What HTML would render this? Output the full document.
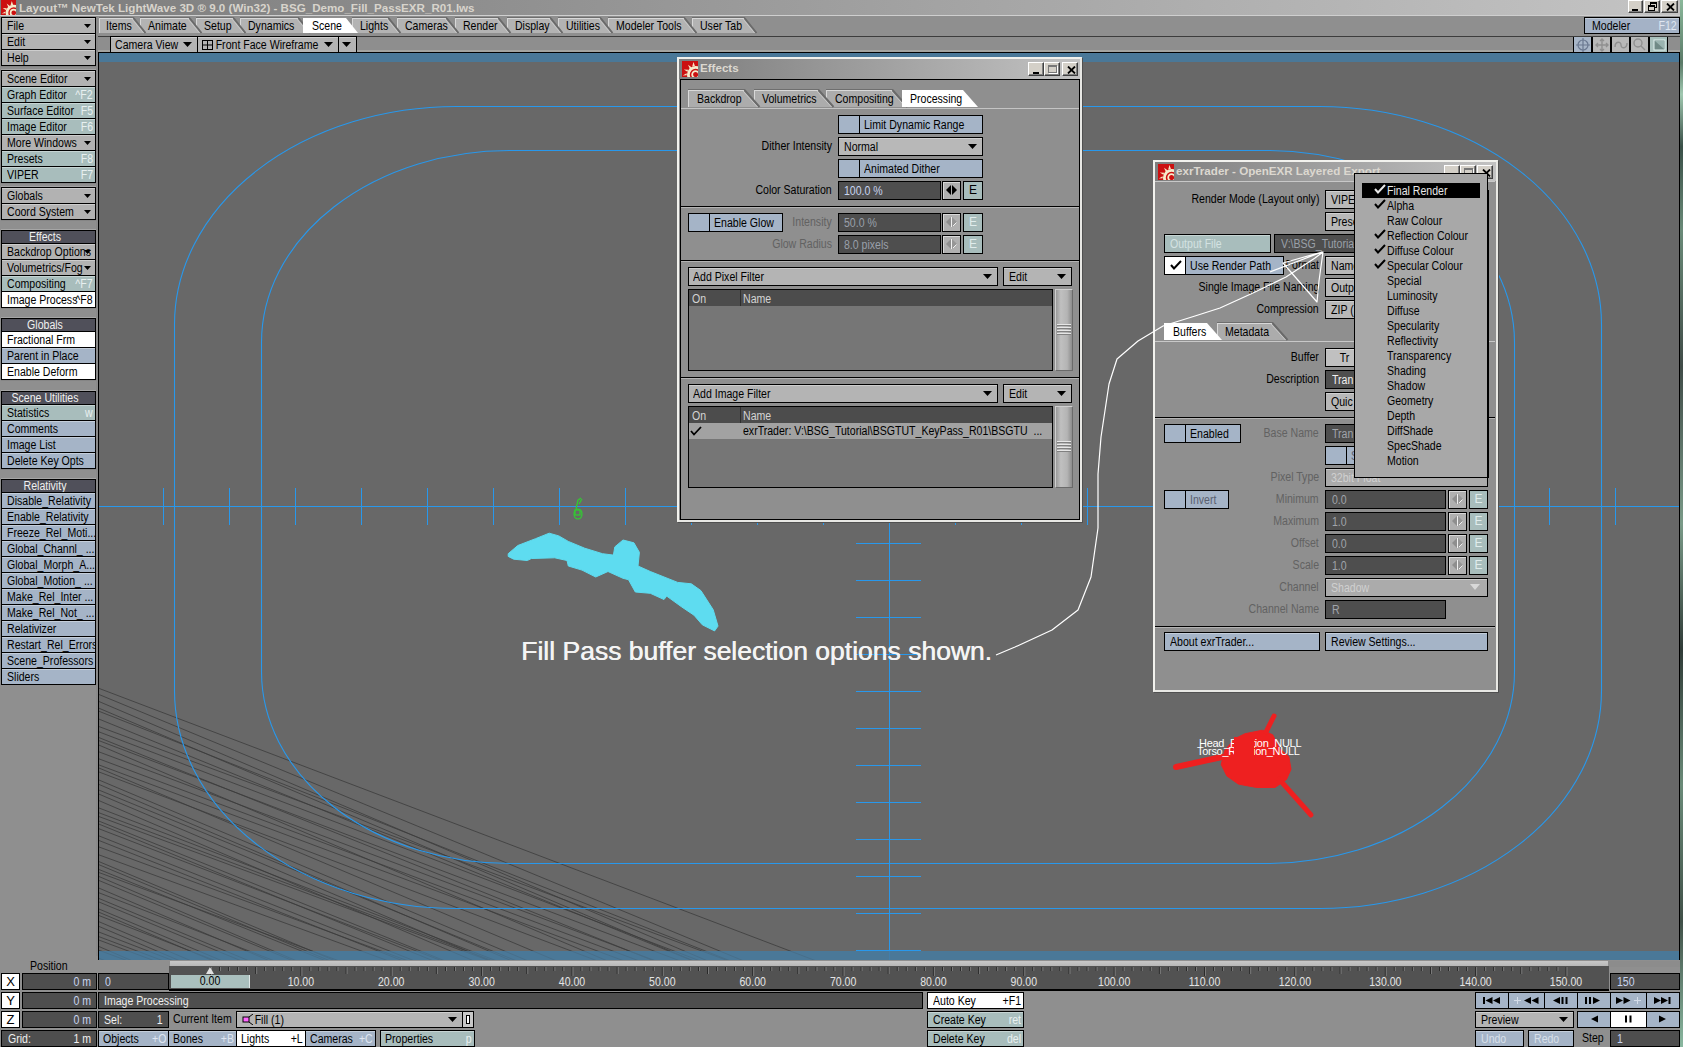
<!DOCTYPE html><html><head><meta charset="utf-8"><style>
*{margin:0;padding:0;box-sizing:border-box}
html,body{width:1683px;height:1047px;overflow:hidden;background:#9a9a9a;font-family:"Liberation Sans",sans-serif;font-size:12px;letter-spacing:0;color:#000}
div,svg,span,i{position:absolute}
.t{white-space:nowrap;line-height:1}
.b{overflow:hidden}
.lbl{white-space:nowrap;top:1px}
.hl{left:0;top:0;right:0;height:1px;background:rgba(255,255,255,.35)}
.a{display:block}
.sx{transform:scaleX(.88);transform-origin:0 0}
.sxr{transform:scaleX(.88);transform-origin:100% 0}
.sxc{transform:scaleX(.88);transform-origin:50% 0}
</style></head><body><div style="left:0px;top:0px;width:1680px;height:16px;background:linear-gradient(to right,#7c7c7c 0%,#8c8c8c 25%,#c4c4c4 100%)"></div>
<div style="left:0px;top:15px;width:1680px;height:1px;background:#cfcfcf"></div>
<svg style="left:1px;top:0px" width="15" height="15" viewBox="0 0 16 16">
<defs><clipPath id="ic1_0"><rect x="0" y="0" width="16" height="16"/></clipPath></defs>
<g clip-path="url(#ic1_0)">
<rect x="0" y="0" width="16" height="16" fill="#cc1010"/>
<g fill="#f6e6c4"><polygon points="11.5,1 10.2,5.5 13,5.2"/><polygon points="6,3.8 8,8.2 9.8,6.6"/><polygon points="1.8,8.5 5.4,10.8 6.2,8.8"/><polygon points="0.8,14.5 4.8,14.2 4.6,12.2"/></g>
<circle cx="13.6" cy="13.6" r="7.2" fill="none" stroke="#f6eccc" stroke-width="2.8"/>
<circle cx="13.6" cy="13.6" r="3.4" fill="none" stroke="#f6eccc" stroke-width="1.8"/>
</g></svg>
<div class="t" style="left:19px;top:2px;font-weight:bold;font-size:11.6px;color:#d8d4cc;letter-spacing:0px">Layout&trade; NewTek LightWave 3D &reg; 9.0 (Win32) - BSG_Demo_Fill_PassEXR_R01.lws</div>
<div style="left:1628px;top:0px;width:15px;height:13px;background:#d4d0c8;border-top:1px solid #fff;border-left:1px solid #fff;border-right:1px solid #404040;border-bottom:1px solid #404040;box-shadow:inset -1px -1px 0 #808080"><div style="left:3px;top:8px;width:6px;height:2px;background:#000"></div></div>
<div style="left:1644px;top:0px;width:16px;height:13px;background:#d4d0c8;border-top:1px solid #fff;border-left:1px solid #fff;border-right:1px solid #404040;border-bottom:1px solid #404040;box-shadow:inset -1px -1px 0 #808080"><div style="left:5px;top:1px;width:7px;height:6px;border:1px solid #000;border-top-width:2px"></div><div style="left:3px;top:4px;width:7px;height:6px;border:1px solid #000;border-top-width:2px;background:#d4d0c8"></div></div>
<div style="left:1661px;top:0px;width:17px;height:13px;background:#d4d0c8;border-top:1px solid #fff;border-left:1px solid #fff;border-right:1px solid #404040;border-bottom:1px solid #404040;box-shadow:inset -1px -1px 0 #808080"><svg style="left:4px;top:2px" width="9" height="8"><path d="M1,0.5 L8,7.5 M8,0.5 L1,7.5" stroke="#000" stroke-width="1.8"/></svg></div>
<div style="left:1680px;top:0px;width:3px;height:1047px;background:linear-gradient(to bottom,#8ab89a 0%,#5a7a68 6%,#a0c8b0 9%,#3a5048 14%,#6a8a78 22%,#404c48 35%,#7a9a88 50%,#303c38 62%,#6a8a78 75%,#405048 88%,#8ab8a0 100%)"></div>
<div style="left:96px;top:16px;width:1584px;height:20px;background:#8f8f8f"></div>
<div style="left:96px;top:36px;width:1584px;height:1px;background:#3c3c3c"></div>
<div style="left:98px;top:37px;width:1582px;height:15px;background:#8e8e8e"></div>
<div style="left:98px;top:50px;width:1582px;height:2px;background:#a4a4a0"></div>
<div style="left:0px;top:16px;width:98px;height:1031px;background:#8f8f8f"></div>
<div style="left:1px;top:66px;width:95px;height:1px;background:#858585"></div>
<div style="left:1px;top:183px;width:95px;height:1px;background:#858585"></div>
<div style="left:1px;top:220px;width:95px;height:1px;background:#858585"></div>
<div style="left:1px;top:308px;width:95px;height:1px;background:#858585"></div>
<div style="left:1px;top:380px;width:95px;height:1px;background:#858585"></div>
<div style="left:1px;top:469px;width:95px;height:1px;background:#858585"></div>
<div style="left:1px;top:69px;width:95px;height:1px;background:#a6a6a6"></div>
<div style="left:1px;top:186px;width:95px;height:1px;background:#a6a6a6"></div>
<div style="left:1px;top:229px;width:95px;height:1px;background:#a6a6a6"></div>
<div style="left:1px;top:317px;width:95px;height:1px;background:#a6a6a6"></div>
<div style="left:1px;top:390px;width:95px;height:1px;background:#a6a6a6"></div>
<div style="left:1px;top:478px;width:95px;height:1px;background:#a6a6a6"></div>
<div style="left:1px;top:684px;width:95px;height:1px;background:#a6a6a6"></div>
<div style="left:96px;top:16px;width:2px;height:940px;background:#8a8a8a"></div>
<div class="b" style="left:1px;top:70px;width:95px;height:17px;background:#b2b2b2;border:1px solid #000;line-height:15px;"><i class="hl"></i><span class="lbl sx" style="left:5px;color:#000;font-size:12px">Scene Editor</span><svg class="a" style="right:4px;top:5.5px" width="7" height="4"><polygon points="0,0 7,0 3.5,4" fill="#000"/></svg></div>
<div class="b" style="left:1px;top:86px;width:95px;height:17px;background:#a8bdbc;border:1px solid #000;line-height:15px;"><i class="hl"></i><span class="lbl sx" style="left:5px;color:#000;font-size:12px">Graph Editor</span><span class="lbl sxr" style="right:2px;color:#e8f0f0;font-size:12px">^F2</span></div>
<div class="b" style="left:1px;top:102px;width:95px;height:17px;background:#a8bdbc;border:1px solid #000;line-height:15px;"><i class="hl"></i><span class="lbl sx" style="left:5px;color:#000;font-size:12px">Surface Editor</span><span class="lbl sxr" style="right:2px;color:#e8f0f0;font-size:12px">F5</span></div>
<div class="b" style="left:1px;top:118px;width:95px;height:17px;background:#a8bdbc;border:1px solid #000;line-height:15px;"><i class="hl"></i><span class="lbl sx" style="left:5px;color:#000;font-size:12px">Image Editor</span><span class="lbl sxr" style="right:2px;color:#e8f0f0;font-size:12px">F6</span></div>
<div class="b" style="left:1px;top:134px;width:95px;height:17px;background:#b2b2b2;border:1px solid #000;line-height:15px;"><i class="hl"></i><span class="lbl sx" style="left:5px;color:#000;font-size:12px">More Windows</span><svg class="a" style="right:4px;top:5.5px" width="7" height="4"><polygon points="0,0 7,0 3.5,4" fill="#000"/></svg></div>
<div class="b" style="left:1px;top:150px;width:95px;height:17px;background:#a8bdbc;border:1px solid #000;line-height:15px;"><i class="hl"></i><span class="lbl sx" style="left:5px;color:#000;font-size:12px">Presets</span><span class="lbl sxr" style="right:2px;color:#e8f0f0;font-size:12px">F8</span></div>
<div class="b" style="left:1px;top:166px;width:95px;height:17px;background:#a8bdbc;border:1px solid #000;line-height:15px;"><i class="hl"></i><span class="lbl sx" style="left:5px;color:#000;font-size:12px">VIPER</span><span class="lbl sxr" style="right:2px;color:#e8f0f0;font-size:12px">F7</span></div>
<div class="b" style="left:1px;top:187px;width:95px;height:17px;background:#b2b2b2;border:1px solid #000;line-height:15px;"><i class="hl"></i><span class="lbl sx" style="left:5px;color:#000;font-size:12px">Globals</span><svg class="a" style="right:4px;top:5.5px" width="7" height="4"><polygon points="0,0 7,0 3.5,4" fill="#000"/></svg></div>
<div class="b" style="left:1px;top:203px;width:95px;height:17px;background:#b2b2b2;border:1px solid #000;line-height:15px;"><i class="hl"></i><span class="lbl sx" style="left:5px;color:#000;font-size:12px">Coord System</span><svg class="a" style="right:4px;top:5.5px" width="7" height="4"><polygon points="0,0 7,0 3.5,4" fill="#000"/></svg></div>
<div style="left:1px;top:230px;width:95px;height:14px;background:#50505a;border:1px solid #000;color:#f0f0f0;line-height:12px;font-size:12px"><span class="sxc" style="left:0;right:7px;top:0;text-align:center">Effects</span></div>
<div class="b" style="left:1px;top:243px;width:95px;height:17px;background:#b2b2b2;border:1px solid #000;line-height:15px;"><i class="hl"></i><span class="lbl sx" style="left:5px;color:#000;font-size:12px">Backdrop Options</span><svg class="a" style="right:4px;top:5.5px" width="7" height="4"><polygon points="0,0 7,0 3.5,4" fill="#000"/></svg></div>
<div class="b" style="left:1px;top:259px;width:95px;height:17px;background:#b2b2b2;border:1px solid #000;line-height:15px;"><i class="hl"></i><span class="lbl sx" style="left:5px;color:#000;font-size:12px">Volumetrics/Fog</span><svg class="a" style="right:4px;top:5.5px" width="7" height="4"><polygon points="0,0 7,0 3.5,4" fill="#000"/></svg></div>
<div class="b" style="left:1px;top:275px;width:95px;height:17px;background:#a8bdbc;border:1px solid #000;line-height:15px;"><i class="hl"></i><span class="lbl sx" style="left:5px;color:#000;font-size:12px">Compositing</span><span class="lbl sxr" style="right:2px;color:#e8f0f0;font-size:12px">^F7</span></div>
<div class="b" style="left:1px;top:291px;width:95px;height:17px;background:#ffffff;border:1px solid #000;line-height:15px;"><i class="hl"></i><span class="lbl sx" style="left:5px;color:#000;font-size:12px">Image Process</span><span class="lbl sxr" style="right:2px;color:#000;font-size:12px">^F8</span></div>
<div style="left:1px;top:318px;width:95px;height:14px;background:#50505a;border:1px solid #000;color:#f0f0f0;line-height:12px;font-size:12px"><span class="sxc" style="left:0;right:7px;top:0;text-align:center">Globals</span></div>
<div class="b" style="left:1px;top:331px;width:95px;height:17px;background:#ffffff;border:1px solid #000;line-height:15px;"><i class="hl"></i><span class="lbl sx" style="left:5px;color:#000;font-size:12px">Fractional Frm</span></div>
<div class="b" style="left:1px;top:347px;width:95px;height:17px;background:#a5b4c7;border:1px solid #000;line-height:15px;"><i class="hl"></i><span class="lbl sx" style="left:5px;color:#000;font-size:12px">Parent in Place</span></div>
<div class="b" style="left:1px;top:363px;width:95px;height:17px;background:#ffffff;border:1px solid #000;line-height:15px;"><i class="hl"></i><span class="lbl sx" style="left:5px;color:#000;font-size:12px">Enable Deform</span></div>
<div style="left:1px;top:391px;width:95px;height:14px;background:#50505a;border:1px solid #000;color:#f0f0f0;line-height:12px;font-size:12px"><span class="sxc" style="left:0;right:7px;top:0;text-align:center">Scene Utilities</span></div>
<div class="b" style="left:1px;top:404px;width:95px;height:17px;background:#a8bdbc;border:1px solid #000;line-height:15px;"><i class="hl"></i><span class="lbl sx" style="left:5px;color:#000;font-size:12px">Statistics</span><span class="lbl sxr" style="right:2px;color:#e8f0f0;font-size:12px">w</span></div>
<div class="b" style="left:1px;top:420px;width:95px;height:17px;background:#a5b4c7;border:1px solid #000;line-height:15px;"><i class="hl"></i><span class="lbl sx" style="left:5px;color:#000;font-size:12px">Comments</span></div>
<div class="b" style="left:1px;top:436px;width:95px;height:17px;background:#a5b4c7;border:1px solid #000;line-height:15px;"><i class="hl"></i><span class="lbl sx" style="left:5px;color:#000;font-size:12px">Image List</span></div>
<div class="b" style="left:1px;top:452px;width:95px;height:17px;background:#a5b4c7;border:1px solid #000;line-height:15px;"><i class="hl"></i><span class="lbl sx" style="left:5px;color:#000;font-size:12px">Delete Key Opts</span></div>
<div style="left:1px;top:479px;width:95px;height:14px;background:#50505a;border:1px solid #000;color:#f0f0f0;line-height:12px;font-size:12px"><span class="sxc" style="left:0;right:7px;top:0;text-align:center">Relativity</span></div>
<div class="b" style="left:1px;top:492px;width:95px;height:17px;background:#a5b4c7;border:1px solid #000;line-height:15px;"><i class="hl"></i><span class="lbl sx" style="left:5px;color:#000;font-size:12px">Disable_Relativity</span></div>
<div class="b" style="left:1px;top:508px;width:95px;height:17px;background:#a5b4c7;border:1px solid #000;line-height:15px;"><i class="hl"></i><span class="lbl sx" style="left:5px;color:#000;font-size:12px">Enable_Relativity</span></div>
<div class="b" style="left:1px;top:524px;width:95px;height:17px;background:#a5b4c7;border:1px solid #000;line-height:15px;"><i class="hl"></i><span class="lbl sx" style="left:5px;color:#000;font-size:12px">Freeze_Rel_Moti...</span></div>
<div class="b" style="left:1px;top:540px;width:95px;height:17px;background:#a5b4c7;border:1px solid #000;line-height:15px;"><i class="hl"></i><span class="lbl sx" style="left:5px;color:#000;font-size:12px">Global_Channl_ ...</span></div>
<div class="b" style="left:1px;top:556px;width:95px;height:17px;background:#a5b4c7;border:1px solid #000;line-height:15px;"><i class="hl"></i><span class="lbl sx" style="left:5px;color:#000;font-size:12px">Global_Morph_A...</span></div>
<div class="b" style="left:1px;top:572px;width:95px;height:17px;background:#a5b4c7;border:1px solid #000;line-height:15px;"><i class="hl"></i><span class="lbl sx" style="left:5px;color:#000;font-size:12px">Global_Motion_ ...</span></div>
<div class="b" style="left:1px;top:588px;width:95px;height:17px;background:#a5b4c7;border:1px solid #000;line-height:15px;"><i class="hl"></i><span class="lbl sx" style="left:5px;color:#000;font-size:12px">Make_Rel_Inter ...</span></div>
<div class="b" style="left:1px;top:604px;width:95px;height:17px;background:#a5b4c7;border:1px solid #000;line-height:15px;"><i class="hl"></i><span class="lbl sx" style="left:5px;color:#000;font-size:12px">Make_Rel_Not_ ...</span></div>
<div class="b" style="left:1px;top:620px;width:95px;height:17px;background:#a5b4c7;border:1px solid #000;line-height:15px;"><i class="hl"></i><span class="lbl sx" style="left:5px;color:#000;font-size:12px">Relativizer</span></div>
<div class="b" style="left:1px;top:636px;width:95px;height:17px;background:#a5b4c7;border:1px solid #000;line-height:15px;"><i class="hl"></i><span class="lbl sx" style="left:5px;color:#000;font-size:12px">Restart_Rel_Errors</span></div>
<div class="b" style="left:1px;top:652px;width:95px;height:17px;background:#a5b4c7;border:1px solid #000;line-height:15px;"><i class="hl"></i><span class="lbl sx" style="left:5px;color:#000;font-size:12px">Scene_Professors</span></div>
<div class="b" style="left:1px;top:668px;width:95px;height:17px;background:#a5b4c7;border:1px solid #000;line-height:15px;"><i class="hl"></i><span class="lbl sx" style="left:5px;color:#000;font-size:12px">Sliders</span></div>
<svg style="left:96px;top:16px" width="700" height="20"><polygon points="596,17 596,2 648,2 660,17" fill="#b3b3b3"/><line x1="596" y1="1.5" x2="649" y2="1.5" stroke="#6e6e6e" stroke-width="1"/><line x1="596.5" y1="2" x2="596.5" y2="17" stroke="#d8d8d8" stroke-width="1"/><line x1="596" y1="2.5" x2="648" y2="2.5" stroke="#d8d8d8" stroke-width="1"/><line x1="648.5" y1="2" x2="660.5" y2="17" stroke="#6a6a6a" stroke-width="2"/><line x1="647" y1="3" x2="658.5" y2="17" stroke="#c8c8c8" stroke-width="1"/><text transform="translate(604,0) scale(.88,1)" x="0" y="13.94" font-family="Liberation Sans" font-size="12" fill="#000">User Tab</text><polygon points="512,17 512,2 588,2 600,17" fill="#b3b3b3"/><line x1="512" y1="1.5" x2="589" y2="1.5" stroke="#6e6e6e" stroke-width="1"/><line x1="512.5" y1="2" x2="512.5" y2="17" stroke="#d8d8d8" stroke-width="1"/><line x1="512" y1="2.5" x2="588" y2="2.5" stroke="#d8d8d8" stroke-width="1"/><line x1="588.5" y1="2" x2="600.5" y2="17" stroke="#6a6a6a" stroke-width="2"/><line x1="587" y1="3" x2="598.5" y2="17" stroke="#c8c8c8" stroke-width="1"/><text transform="translate(520,0) scale(.88,1)" x="0" y="13.94" font-family="Liberation Sans" font-size="12" fill="#000">Modeler Tools</text><polygon points="462,17 462,2 504,2 516,17" fill="#b3b3b3"/><line x1="462" y1="1.5" x2="505" y2="1.5" stroke="#6e6e6e" stroke-width="1"/><line x1="462.5" y1="2" x2="462.5" y2="17" stroke="#d8d8d8" stroke-width="1"/><line x1="462" y1="2.5" x2="504" y2="2.5" stroke="#d8d8d8" stroke-width="1"/><line x1="504.5" y1="2" x2="516.5" y2="17" stroke="#6a6a6a" stroke-width="2"/><line x1="503" y1="3" x2="514.5" y2="17" stroke="#c8c8c8" stroke-width="1"/><text transform="translate(470,0) scale(.88,1)" x="0" y="13.94" font-family="Liberation Sans" font-size="12" fill="#000">Utilities</text><polygon points="411,17 411,2 454,2 466,17" fill="#b3b3b3"/><line x1="411" y1="1.5" x2="455" y2="1.5" stroke="#6e6e6e" stroke-width="1"/><line x1="411.5" y1="2" x2="411.5" y2="17" stroke="#d8d8d8" stroke-width="1"/><line x1="411" y1="2.5" x2="454" y2="2.5" stroke="#d8d8d8" stroke-width="1"/><line x1="454.5" y1="2" x2="466.5" y2="17" stroke="#6a6a6a" stroke-width="2"/><line x1="453" y1="3" x2="464.5" y2="17" stroke="#c8c8c8" stroke-width="1"/><text transform="translate(419,0) scale(.88,1)" x="0" y="13.94" font-family="Liberation Sans" font-size="12" fill="#000">Display</text><polygon points="359,17 359,2 402,2 414,17" fill="#b3b3b3"/><line x1="359" y1="1.5" x2="403" y2="1.5" stroke="#6e6e6e" stroke-width="1"/><line x1="359.5" y1="2" x2="359.5" y2="17" stroke="#d8d8d8" stroke-width="1"/><line x1="359" y1="2.5" x2="402" y2="2.5" stroke="#d8d8d8" stroke-width="1"/><line x1="402.5" y1="2" x2="414.5" y2="17" stroke="#6a6a6a" stroke-width="2"/><line x1="401" y1="3" x2="412.5" y2="17" stroke="#c8c8c8" stroke-width="1"/><text transform="translate(367,0) scale(.88,1)" x="0" y="13.94" font-family="Liberation Sans" font-size="12" fill="#000">Render</text><polygon points="301,17 301,2 350,2 362,17" fill="#b3b3b3"/><line x1="301" y1="1.5" x2="351" y2="1.5" stroke="#6e6e6e" stroke-width="1"/><line x1="301.5" y1="2" x2="301.5" y2="17" stroke="#d8d8d8" stroke-width="1"/><line x1="301" y1="2.5" x2="350" y2="2.5" stroke="#d8d8d8" stroke-width="1"/><line x1="350.5" y1="2" x2="362.5" y2="17" stroke="#6a6a6a" stroke-width="2"/><line x1="349" y1="3" x2="360.5" y2="17" stroke="#c8c8c8" stroke-width="1"/><text transform="translate(309,0) scale(.88,1)" x="0" y="13.94" font-family="Liberation Sans" font-size="12" fill="#000">Cameras</text><polygon points="256,17 256,2 292,2 304,17" fill="#b3b3b3"/><line x1="256" y1="1.5" x2="293" y2="1.5" stroke="#6e6e6e" stroke-width="1"/><line x1="256.5" y1="2" x2="256.5" y2="17" stroke="#d8d8d8" stroke-width="1"/><line x1="256" y1="2.5" x2="292" y2="2.5" stroke="#d8d8d8" stroke-width="1"/><line x1="292.5" y1="2" x2="304.5" y2="17" stroke="#6a6a6a" stroke-width="2"/><line x1="291" y1="3" x2="302.5" y2="17" stroke="#c8c8c8" stroke-width="1"/><text transform="translate(264,0) scale(.88,1)" x="0" y="13.94" font-family="Liberation Sans" font-size="12" fill="#000">Lights</text><polygon points="144,17 144,2 202,2 214,17" fill="#b3b3b3"/><line x1="144" y1="1.5" x2="203" y2="1.5" stroke="#6e6e6e" stroke-width="1"/><line x1="144.5" y1="2" x2="144.5" y2="17" stroke="#d8d8d8" stroke-width="1"/><line x1="144" y1="2.5" x2="202" y2="2.5" stroke="#d8d8d8" stroke-width="1"/><line x1="202.5" y1="2" x2="214.5" y2="17" stroke="#6a6a6a" stroke-width="2"/><line x1="201" y1="3" x2="212.5" y2="17" stroke="#c8c8c8" stroke-width="1"/><text transform="translate(152,0) scale(.88,1)" x="0" y="13.94" font-family="Liberation Sans" font-size="12" fill="#000">Dynamics</text><polygon points="100,17 100,2 137,2 149,17" fill="#b3b3b3"/><line x1="100" y1="1.5" x2="138" y2="1.5" stroke="#6e6e6e" stroke-width="1"/><line x1="100.5" y1="2" x2="100.5" y2="17" stroke="#d8d8d8" stroke-width="1"/><line x1="100" y1="2.5" x2="137" y2="2.5" stroke="#d8d8d8" stroke-width="1"/><line x1="137.5" y1="2" x2="149.5" y2="17" stroke="#6a6a6a" stroke-width="2"/><line x1="136" y1="3" x2="147.5" y2="17" stroke="#c8c8c8" stroke-width="1"/><text transform="translate(108,0) scale(.88,1)" x="0" y="13.94" font-family="Liberation Sans" font-size="12" fill="#000">Setup</text><polygon points="44,17 44,2 93,2 105,17" fill="#b3b3b3"/><line x1="44" y1="1.5" x2="94" y2="1.5" stroke="#6e6e6e" stroke-width="1"/><line x1="44.5" y1="2" x2="44.5" y2="17" stroke="#d8d8d8" stroke-width="1"/><line x1="44" y1="2.5" x2="93" y2="2.5" stroke="#d8d8d8" stroke-width="1"/><line x1="93.5" y1="2" x2="105.5" y2="17" stroke="#6a6a6a" stroke-width="2"/><line x1="92" y1="3" x2="103.5" y2="17" stroke="#c8c8c8" stroke-width="1"/><text transform="translate(52,0) scale(.88,1)" x="0" y="13.94" font-family="Liberation Sans" font-size="12" fill="#000">Animate</text><polygon points="3,17 3,2 37,2 49,17" fill="#b3b3b3"/><line x1="3" y1="1.5" x2="38" y2="1.5" stroke="#6e6e6e" stroke-width="1"/><line x1="3.5" y1="2" x2="3.5" y2="17" stroke="#d8d8d8" stroke-width="1"/><line x1="3" y1="2.5" x2="37" y2="2.5" stroke="#d8d8d8" stroke-width="1"/><line x1="37.5" y1="2" x2="49.5" y2="17" stroke="#6a6a6a" stroke-width="2"/><line x1="36" y1="3" x2="47.5" y2="17" stroke="#c8c8c8" stroke-width="1"/><text transform="translate(10,0) scale(.88,1)" x="0" y="13.94" font-family="Liberation Sans" font-size="12" fill="#000">Items</text><polygon points="207,17 207,2 250,2 262,17" fill="#ffffff"/><text transform="translate(216,0) scale(.88,1)" x="0" y="13.94" font-family="Liberation Sans" font-size="12" fill="#000">Scene</text></svg>
<div class="b" style="left:1584px;top:17px;width:96px;height:17px;background:#a4b2c6;border:1px solid #000;line-height:15px;"><i class="hl"></i><span class="lbl sx" style="left:7px;color:#000;font-size:12px">Modeler</span><span class="lbl sxr" style="right:2px;color:#dfe6f0;font-size:12px">F12</span></div>
<div class="b" style="left:1px;top:17px;width:95px;height:17px;background:#b2b2b2;border:1px solid #000;line-height:15px;"><i class="hl"></i><span class="lbl sx" style="left:5px;color:#000;font-size:12px">File</span><svg class="a" style="right:4px;top:5.5px" width="7" height="4"><polygon points="0,0 7,0 3.5,4" fill="#000"/></svg></div>
<div class="b" style="left:1px;top:33px;width:95px;height:17px;background:#b2b2b2;border:1px solid #000;line-height:15px;"><i class="hl"></i><span class="lbl sx" style="left:5px;color:#000;font-size:12px">Edit</span><svg class="a" style="right:4px;top:5.5px" width="7" height="4"><polygon points="0,0 7,0 3.5,4" fill="#000"/></svg></div>
<div class="b" style="left:1px;top:49px;width:95px;height:17px;background:#b2b2b2;border:1px solid #000;line-height:15px;"><i class="hl"></i><span class="lbl sx" style="left:5px;color:#000;font-size:12px">Help</span><svg class="a" style="right:4px;top:5.5px" width="7" height="4"><polygon points="0,0 7,0 3.5,4" fill="#000"/></svg></div>
<div class="b" style="left:110px;top:36px;width:88px;height:17px;background:#b4b4b4;border:1px solid #000;border-bottom:none;line-height:15px;"><i class="hl"></i><span class="lbl sx" style="left:4px;color:#000;font-size:12px">Camera View</span><svg class="a" style="right:5px;top:5.0px" width="9" height="5"><polygon points="0,0 9,0 4.5,5" fill="#000"/></svg></div>
<div class="b" style="left:197px;top:36px;width:142px;height:17px;background:#b4b4b4;border:1px solid #000;border-bottom:none;line-height:15px;"><i class="hl"></i><span class="lbl sx" style="left:3px;color:#000;font-size:12px">&nbsp;&nbsp;&nbsp;&nbsp;&nbsp;Front Face Wireframe</span><svg class="a" style="right:5px;top:5.0px" width="9" height="5"><polygon points="0,0 9,0 4.5,5" fill="#000"/></svg></div>
<svg style="left:202px;top:40px" width="11" height="10"><rect x="0.5" y="0.5" width="10" height="9" fill="none" stroke="#000"/><path d="M5.5,0 V10 M0,5 H11" stroke="#000"/></svg>
<div class="b" style="left:338px;top:36px;width:19px;height:17px;background:#b4b4b4;border:1px solid #000;border-bottom:none;line-height:15px;"><i class="hl"></i><span class="lbl sx" style="left:6px;color:#000;font-size:12px"></span><svg class="a" style="right:5px;top:5.0px" width="9" height="5"><polygon points="0,0 9,0 4.5,5" fill="#000"/></svg></div>
<div style="left:1573px;top:37px;width:19px;height:16px;background:#a8b6c8;border-left:1px solid #000;border-right:1px solid #000"></div>
<div style="left:1592px;top:37px;width:19px;height:16px;background:#b8b8b8;border-left:1px solid #000;border-right:1px solid #000"></div>
<div style="left:1611px;top:37px;width:19px;height:16px;background:#b8b8b8;border-left:1px solid #000;border-right:1px solid #000"></div>
<div style="left:1630px;top:37px;width:19px;height:16px;background:#b8b8b8;border-left:1px solid #000;border-right:1px solid #000"></div>
<div style="left:1649px;top:37px;width:19px;height:16px;background:#a8c0bc;border-left:1px solid #000;border-right:1px solid #000"></div>
<svg style="left:1573px;top:37px" width="96" height="16">
<g fill="none" stroke="#6a7890" stroke-width="1.2"><circle cx="10" cy="8" r="5"/><path d="M10,1 V15 M3,8 H17"/></g>
<g fill="none" stroke="#909090" stroke-width="1.4"><path d="M29,2 V14 M23,8 H35 M27,4 L29,2 L31,4 M27,12 L29,14 L31,12 M25,6 L23,8 L25,10 M33,6 L35,8 L33,10"/></g>
<g fill="none" stroke="#909090" stroke-width="1.4"><path d="M42,10 C42,4 48,4 48,8 M48,8 C48,12 54,12 54,6"/></g>
<g fill="none" stroke="#909090" stroke-width="1.4"><circle cx="65" cy="6" r="4"/><path d="M68,9 L72,13"/></g>
<g><rect x="81" y="3" width="11" height="10" fill="#708a86" stroke="#e0f0ee" stroke-width="1"/><polygon points="82,4 91,4 91,12" fill="#9ab4b0"/></g>
</svg>
<div style="left:98px;top:52px;width:1582px;height:909px;background:#686868;border:1px solid #000"></div>
<div style="left:99px;top:53px;width:1580px;height:9px;background:linear-gradient(to bottom,#4a7a9a 0%,#4a7898 75%,#5a6e7c 100%)"></div>
<div style="left:99px;top:951px;width:1580px;height:9px;background:#4a7898"></div>
<svg style="left:0;top:0" width="1683" height="1047"><defs><clipPath id="vp"><rect x="99" y="53" width="1580" height="907"/></clipPath></defs><g clip-path="url(#vp)"><line x1="98" y1="688.0" x2="819.1" y2="962" stroke="#3c3c3c" stroke-width="1" stroke-opacity="0.8"/><line x1="98" y1="694.1" x2="746.3" y2="962" stroke="#3c3c3c" stroke-width="1" stroke-opacity="0.8"/><line x1="98" y1="701.1" x2="710.1" y2="962" stroke="#3c3c3c" stroke-width="1" stroke-opacity="0.8"/><line x1="98" y1="707.8" x2="696.2" y2="962" stroke="#3c3c3c" stroke-width="1" stroke-opacity="0.8"/><line x1="98" y1="710.9" x2="733.2" y2="962" stroke="#3c3c3c" stroke-width="1" stroke-opacity="0.8"/><line x1="98" y1="718.7" x2="695.6" y2="962" stroke="#3c3c3c" stroke-width="1" stroke-opacity="0.8"/><line x1="98" y1="726.2" x2="731.4" y2="962" stroke="#3c3c3c" stroke-width="1" stroke-opacity="0.8"/><line x1="98" y1="731.5" x2="702.9" y2="962" stroke="#3c3c3c" stroke-width="1" stroke-opacity="0.8"/><line x1="98" y1="737.2" x2="656.7" y2="962" stroke="#3c3c3c" stroke-width="1" stroke-opacity="0.8"/><line x1="98" y1="740.3" x2="682.9" y2="962" stroke="#3c3c3c" stroke-width="1" stroke-opacity="0.8"/><line x1="98" y1="744.7" x2="609.9" y2="962" stroke="#3c3c3c" stroke-width="1" stroke-opacity="0.8"/><line x1="98" y1="751.5" x2="658.7" y2="962" stroke="#3c3c3c" stroke-width="1" stroke-opacity="0.8"/><line x1="98" y1="758.5" x2="642.1" y2="962" stroke="#3c3c3c" stroke-width="1" stroke-opacity="0.8"/><line x1="98" y1="764.6" x2="626.9" y2="962" stroke="#3c3c3c" stroke-width="1" stroke-opacity="0.8"/><line x1="98" y1="767.6" x2="559.1" y2="962" stroke="#3c3c3c" stroke-width="1" stroke-opacity="0.8"/><line x1="98" y1="771.6" x2="600.3" y2="962" stroke="#3c3c3c" stroke-width="1" stroke-opacity="0.8"/><line x1="98" y1="779.6" x2="530.6" y2="962" stroke="#3c3c3c" stroke-width="1" stroke-opacity="0.8"/><line x1="98" y1="784.0" x2="514.4" y2="962" stroke="#3c3c3c" stroke-width="1" stroke-opacity="0.8"/><line x1="98" y1="789.7" x2="519.2" y2="962" stroke="#3c3c3c" stroke-width="1" stroke-opacity="0.8"/><line x1="98" y1="793.7" x2="492.9" y2="962" stroke="#3c3c3c" stroke-width="1" stroke-opacity="0.8"/><line x1="98" y1="800.2" x2="476.3" y2="962" stroke="#3c3c3c" stroke-width="1" stroke-opacity="0.8"/><line x1="98" y1="807.6" x2="499.5" y2="962" stroke="#3c3c3c" stroke-width="1" stroke-opacity="0.8"/><line x1="98" y1="812.4" x2="496.0" y2="962" stroke="#3c3c3c" stroke-width="1" stroke-opacity="0.8"/><line x1="98" y1="816.2" x2="492.9" y2="962" stroke="#3c3c3c" stroke-width="1" stroke-opacity="0.8"/><line x1="98" y1="820.7" x2="447.6" y2="962" stroke="#3c3c3c" stroke-width="1" stroke-opacity="0.8"/><line x1="98" y1="823.7" x2="436.1" y2="962" stroke="#3c3c3c" stroke-width="1" stroke-opacity="0.8"/><line x1="98" y1="828.4" x2="444.9" y2="962" stroke="#3c3c3c" stroke-width="1" stroke-opacity="0.8"/><line x1="98" y1="835.5" x2="417.3" y2="962" stroke="#3c3c3c" stroke-width="1" stroke-opacity="0.8"/><line x1="98" y1="840.1" x2="405.7" y2="962" stroke="#3c3c3c" stroke-width="1" stroke-opacity="0.8"/><line x1="98" y1="846.6" x2="411.0" y2="962" stroke="#3c3c3c" stroke-width="1" stroke-opacity="0.8"/><line x1="98" y1="854.5" x2="391.4" y2="962" stroke="#3c3c3c" stroke-width="1" stroke-opacity="0.8"/><line x1="98" y1="861.2" x2="338.0" y2="962" stroke="#3c3c3c" stroke-width="1" stroke-opacity="0.8"/><line x1="98" y1="864.3" x2="332.7" y2="962" stroke="#3c3c3c" stroke-width="1" stroke-opacity="0.8"/><line x1="98" y1="869.1" x2="328.7" y2="962" stroke="#3c3c3c" stroke-width="1" stroke-opacity="0.8"/><line x1="98" y1="872.2" x2="342.1" y2="962" stroke="#3c3c3c" stroke-width="1" stroke-opacity="0.8"/><line x1="98" y1="876.1" x2="299.2" y2="962" stroke="#3c3c3c" stroke-width="1" stroke-opacity="0.8"/><line x1="98" y1="880.1" x2="295.9" y2="962" stroke="#3c3c3c" stroke-width="1" stroke-opacity="0.8"/><line x1="98" y1="887.7" x2="272.3" y2="962" stroke="#3c3c3c" stroke-width="1" stroke-opacity="0.8"/><line x1="98" y1="892.4" x2="277.3" y2="962" stroke="#3c3c3c" stroke-width="1" stroke-opacity="0.8"/><line x1="98" y1="898.1" x2="251.9" y2="962" stroke="#3c3c3c" stroke-width="1" stroke-opacity="0.8"/><line x1="98" y1="901.6" x2="244.0" y2="962" stroke="#3c3c3c" stroke-width="1" stroke-opacity="0.8"/><line x1="98" y1="908.6" x2="224.9" y2="962" stroke="#3c3c3c" stroke-width="1" stroke-opacity="0.8"/><line x1="98" y1="911.8" x2="215.8" y2="962" stroke="#3c3c3c" stroke-width="1" stroke-opacity="0.8"/><line x1="98" y1="915.2" x2="218.8" y2="962" stroke="#3c3c3c" stroke-width="1" stroke-opacity="0.8"/><line x1="98" y1="921.3" x2="193.9" y2="962" stroke="#3c3c3c" stroke-width="1" stroke-opacity="0.8"/><line x1="98" y1="926.0" x2="182.7" y2="962" stroke="#3c3c3c" stroke-width="1" stroke-opacity="0.8"/><line x1="98" y1="931.7" x2="176.6" y2="962" stroke="#3c3c3c" stroke-width="1" stroke-opacity="0.8"/><line x1="98" y1="936.3" x2="166.3" y2="962" stroke="#3c3c3c" stroke-width="1" stroke-opacity="0.8"/><line x1="98" y1="939.7" x2="157.6" y2="962" stroke="#3c3c3c" stroke-width="1" stroke-opacity="0.8"/><line x1="98" y1="946.1" x2="134.9" y2="962" stroke="#3c3c3c" stroke-width="1" stroke-opacity="0.8"/><line x1="98" y1="949.9" x2="130.8" y2="962" stroke="#3c3c3c" stroke-width="1" stroke-opacity="0.8"/><line x1="98" y1="957.9" x2="108.3" y2="962" stroke="#3c3c3c" stroke-width="1" stroke-opacity="0.8"/><line x1="98" y1="962.9" x2="95.7" y2="962" stroke="#3c3c3c" stroke-width="1" stroke-opacity="0.8"/><line x1="98" y1="968.9" x2="81.6" y2="962" stroke="#3c3c3c" stroke-width="1" stroke-opacity="0.8"/><path d="M174.5,324.5 A282,218 0 0 1 456.5,106.5 H1319.5 A282,218 0 0 1 1601.5,324.5 V690.5 A282,218 0 0 1 1319.5,908.5 H456.5 A282,218 0 0 1 174.5,690.5 Z" fill="none" stroke="#2898ec" stroke-width="1.1"/><path d="M261.5,342.5 A248,192 0 0 1 509.5,150.5 H1266.5 A248,192 0 0 1 1514.5,342.5 V671.5 A248,192 0 0 1 1266.5,863.5 H509.5 A248,192 0 0 1 261.5,671.5 Z" fill="none" stroke="#2898ec" stroke-width="1.1"/><line x1="99" y1="506.5" x2="1679" y2="506.5" stroke="#2898ec" stroke-width="1"/><line x1="889.5" y1="53" x2="889.5" y2="960" stroke="#2898ec" stroke-width="1"/><line x1="97.5" y1="488" x2="97.5" y2="525" stroke="#2898ec" stroke-width="1"/><line x1="163.5" y1="488" x2="163.5" y2="525" stroke="#2898ec" stroke-width="1"/><line x1="229.5" y1="488" x2="229.5" y2="525" stroke="#2898ec" stroke-width="1"/><line x1="295.5" y1="488" x2="295.5" y2="525" stroke="#2898ec" stroke-width="1"/><line x1="361.5" y1="488" x2="361.5" y2="525" stroke="#2898ec" stroke-width="1"/><line x1="427.5" y1="488" x2="427.5" y2="525" stroke="#2898ec" stroke-width="1"/><line x1="493.5" y1="488" x2="493.5" y2="525" stroke="#2898ec" stroke-width="1"/><line x1="559.5" y1="488" x2="559.5" y2="525" stroke="#2898ec" stroke-width="1"/><line x1="625.5" y1="488" x2="625.5" y2="525" stroke="#2898ec" stroke-width="1"/><line x1="691.5" y1="488" x2="691.5" y2="525" stroke="#2898ec" stroke-width="1"/><line x1="757.5" y1="488" x2="757.5" y2="525" stroke="#2898ec" stroke-width="1"/><line x1="823.5" y1="488" x2="823.5" y2="525" stroke="#2898ec" stroke-width="1"/><line x1="955.5" y1="488" x2="955.5" y2="525" stroke="#2898ec" stroke-width="1"/><line x1="1021.5" y1="488" x2="1021.5" y2="525" stroke="#2898ec" stroke-width="1"/><line x1="1087.5" y1="488" x2="1087.5" y2="525" stroke="#2898ec" stroke-width="1"/><line x1="1153.5" y1="488" x2="1153.5" y2="525" stroke="#2898ec" stroke-width="1"/><line x1="1219.5" y1="488" x2="1219.5" y2="525" stroke="#2898ec" stroke-width="1"/><line x1="1285.5" y1="488" x2="1285.5" y2="525" stroke="#2898ec" stroke-width="1"/><line x1="1351.5" y1="488" x2="1351.5" y2="525" stroke="#2898ec" stroke-width="1"/><line x1="1417.5" y1="488" x2="1417.5" y2="525" stroke="#2898ec" stroke-width="1"/><line x1="1483.5" y1="488" x2="1483.5" y2="525" stroke="#2898ec" stroke-width="1"/><line x1="1549.5" y1="488" x2="1549.5" y2="525" stroke="#2898ec" stroke-width="1"/><line x1="1615.5" y1="488" x2="1615.5" y2="525" stroke="#2898ec" stroke-width="1"/><line x1="1681.5" y1="488" x2="1681.5" y2="525" stroke="#2898ec" stroke-width="1"/><line x1="856" y1="62.5" x2="921" y2="62.5" stroke="#2898ec" stroke-width="1"/><line x1="856" y1="99.5" x2="921" y2="99.5" stroke="#2898ec" stroke-width="1"/><line x1="856" y1="136.5" x2="921" y2="136.5" stroke="#2898ec" stroke-width="1"/><line x1="856" y1="173.5" x2="921" y2="173.5" stroke="#2898ec" stroke-width="1"/><line x1="856" y1="210.5" x2="921" y2="210.5" stroke="#2898ec" stroke-width="1"/><line x1="856" y1="247.5" x2="921" y2="247.5" stroke="#2898ec" stroke-width="1"/><line x1="856" y1="284.5" x2="921" y2="284.5" stroke="#2898ec" stroke-width="1"/><line x1="856" y1="321.5" x2="921" y2="321.5" stroke="#2898ec" stroke-width="1"/><line x1="856" y1="358.5" x2="921" y2="358.5" stroke="#2898ec" stroke-width="1"/><line x1="856" y1="395.5" x2="921" y2="395.5" stroke="#2898ec" stroke-width="1"/><line x1="856" y1="432.5" x2="921" y2="432.5" stroke="#2898ec" stroke-width="1"/><line x1="856" y1="469.5" x2="921" y2="469.5" stroke="#2898ec" stroke-width="1"/><line x1="856" y1="543.5" x2="921" y2="543.5" stroke="#2898ec" stroke-width="1"/><line x1="856" y1="580.5" x2="921" y2="580.5" stroke="#2898ec" stroke-width="1"/><line x1="856" y1="617.5" x2="921" y2="617.5" stroke="#2898ec" stroke-width="1"/><line x1="856" y1="654.5" x2="921" y2="654.5" stroke="#2898ec" stroke-width="1"/><line x1="856" y1="691.5" x2="921" y2="691.5" stroke="#2898ec" stroke-width="1"/><line x1="856" y1="728.5" x2="921" y2="728.5" stroke="#2898ec" stroke-width="1"/><line x1="856" y1="765.5" x2="921" y2="765.5" stroke="#2898ec" stroke-width="1"/><line x1="856" y1="802.5" x2="921" y2="802.5" stroke="#2898ec" stroke-width="1"/><line x1="856" y1="839.5" x2="921" y2="839.5" stroke="#2898ec" stroke-width="1"/><line x1="856" y1="876.5" x2="921" y2="876.5" stroke="#2898ec" stroke-width="1"/><line x1="856" y1="913.5" x2="921" y2="913.5" stroke="#2898ec" stroke-width="1"/><line x1="856" y1="950.5" x2="921" y2="950.5" stroke="#2898ec" stroke-width="1"/><path d="M508.2,553.7 L517.8,545.5 L535.5,538.7 L549.2,533.2 L558.8,535.9 L568.3,541.4 L584.7,548.2 L602.5,553.7 L613.4,555.1 L614.8,546.9 L623.0,540.0 L633.9,542.8 L639.4,552.3 L638.0,566.0 L650.3,571.5 L677.7,582.4 L691.3,583.8 L700.9,590.6 L713.2,609.7 L718.0,626.1 L714.6,630.9 L702.3,624.8 L694.0,615.2 L681.8,607.0 L666.7,596.1 L664.0,599.5 L650.3,593.3 L635.3,592.0 L628.5,579.7 L623.0,578.3 L608.0,571.5 L595.7,577.0 L582.0,570.1 L568.3,566.0 L567.0,560.5 L554.7,557.8 L531.4,558.5 L527.3,560.5 L513.7,559.2 L508.2,556.4 Z" fill="#5edcf0" stroke="#5edcf0" stroke-width="1" stroke-linejoin="round"/><g fill="none" stroke="#2fd02f" stroke-width="1.2"><ellipse cx="578" cy="514" rx="4" ry="5"/><path d="M576,509 L578,500 L581,498 M579,504 L582,499"/><rect x="575" y="510" width="5" height="5"/></g><g fill="#ee2020" stroke="#ee2020" stroke-linecap="round"><path d="M1245.2,733.7 L1262.4,730.2 L1272.7,734.8 L1279.6,748.6 L1288.8,756.6 L1291.0,769.2 L1286.5,779.5 L1275.0,787.5 L1256.7,787.5 L1238.4,784.1 L1226.9,776.0 L1221.2,764.6 L1224.6,750.8 L1233.8,739.4 Z" stroke-width="1"/><path d="M1266,732 L1274,716" stroke-width="5" fill="none"/><path d="M1222,757 L1176,767" stroke-width="6" fill="none"/><path d="M1279,779 L1311,815" stroke-width="5" fill="none"/></g><text x="1199" y="747" font-family="Liberation Sans" font-size="11" letter-spacing="-0.3" fill="#ffffff">Head_Rotation_NULL</text><text x="1197" y="755" font-family="Liberation Sans" font-size="11" letter-spacing="-0.3" fill="#ffffff">Torso_Rotation_NULL</text><rect x="1234" y="737" width="20" height="19" fill="#ee2020"/><rect x="99" y="53" width="1580" height="9" fill="#4a7898"/><rect x="99" y="951" width="1580" height="9" fill="#4a7898" fill-opacity="0.8"/></g></svg>
<div style="left:0px;top:960px;width:1680px;height:87px;background:#8f8f8f"></div>
<div class="t sx" style="left:30px;top:960px;font-size:12px">Position</div>
<div style="left:1px;top:973px;width:19px;height:17px;background:#fff;border:1px solid #000;text-align:center;line-height:15px;font-size:13px">X</div>
<div style="left:22px;top:973px;width:75px;height:17px;background:#4e4e4e;border:1px solid #000;line-height:15px;color:#c8d4ee;font-size:12px;white-space:nowrap;overflow:hidden;"><span class="sxr" style="right:5px;top:1px">0 m</span></div>
<div style="left:1px;top:992px;width:19px;height:17px;background:#fff;border:1px solid #000;text-align:center;line-height:15px;font-size:13px">Y</div>
<div style="left:22px;top:992px;width:75px;height:17px;background:#4e4e4e;border:1px solid #000;line-height:15px;color:#c8d4ee;font-size:12px;white-space:nowrap;overflow:hidden;"><span class="sxr" style="right:5px;top:1px">0 m</span></div>
<div style="left:1px;top:1011px;width:19px;height:17px;background:#fff;border:1px solid #000;text-align:center;line-height:15px;font-size:13px">Z</div>
<div style="left:22px;top:1011px;width:75px;height:17px;background:#4e4e4e;border:1px solid #000;line-height:15px;color:#c8d4ee;font-size:12px;white-space:nowrap;overflow:hidden;"><span class="sxr" style="right:5px;top:1px">0 m</span></div>
<div style="left:1px;top:1030px;width:96px;height:17px;background:#4e4e4e;border:1px solid #000;line-height:15px;color:#f0f0f0;font-size:12px;white-space:nowrap;overflow:hidden;"><span class="sx" style="left:6px;top:1px">Grid:</span><span class="sxr" style="right:5px;top:1px;color:#f0f0f0">1 m</span></div>
<div style="left:98px;top:973px;width:71px;height:17px;background:#4e4e4e;border:1px solid #000;line-height:15px;color:#c8d4ee;font-size:12px;white-space:nowrap;overflow:hidden;"><span class="sx" style="left:6px;top:1px">0</span></div>
<div style="left:98px;top:992px;width:825px;height:17px;background:#4e4e4e;border:1px solid #000;line-height:15px;color:#f0f0f0;font-size:12px;white-space:nowrap;overflow:hidden;"><span class="sx" style="left:5px;top:1px">Image Processing</span></div>
<div style="left:98px;top:1011px;width:71px;height:17px;background:#4e4e4e;border:1px solid #000;line-height:15px;color:#f0f0f0;font-size:12px;white-space:nowrap;overflow:hidden;"><span class="sx" style="left:5px;top:1px">Sel:</span><span class="sxr" style="right:5px;top:1px;color:#f0f0f0">1</span></div>
<div class="t sx" style="left:173px;top:1013px;font-size:12px">Current Item</div>
<div class="b" style="left:236px;top:1011px;width:227px;height:17px;background:#b4b4b4;border:1px solid #000;line-height:15px;"><i class="hl"></i><span class="lbl sx" style="left:3px;color:#000;font-size:12px">&nbsp;&nbsp;&nbsp;&nbsp;&nbsp;Fill (1)</span><svg class="a" style="right:5px;top:5.0px" width="9" height="5"><polygon points="0,0 9,0 4.5,5" fill="#000"/></svg></div>
<svg style="left:242px;top:1014px" width="12" height="11"><rect x="1" y="3" width="6" height="5" fill="#ff66ff" stroke="#000" stroke-width="1"/><path d="M7,3 L11,0 M7,8 L11,11" stroke="#000" stroke-width="1"/></svg>
<div style="left:462px;top:1011px;width:12px;height:17px;background:#c8c8c8;border:1px solid #000"><div style="left:3px;top:3px;width:4px;height:9px;border:1px solid #000;background:#fff"></div></div>
<div class="b" style="left:98px;top:1030px;width:71px;height:17px;background:#a5b4c7;border:1px solid #000;line-height:15px;"><i class="hl"></i><span class="lbl sx" style="left:4px;color:#000;font-size:12px">Objects</span><span class="lbl sxr" style="right:2px;color:#dfe6f2;font-size:12px">+O</span></div>
<div class="b" style="left:168px;top:1030px;width:69px;height:17px;background:#a5b4c7;border:1px solid #000;line-height:15px;"><i class="hl"></i><span class="lbl sx" style="left:4px;color:#000;font-size:12px">Bones</span><span class="lbl sxr" style="right:2px;color:#dfe6f2;font-size:12px">+B</span></div>
<div class="b" style="left:236px;top:1030px;width:70px;height:17px;background:#ffffff;border:1px solid #000;line-height:15px;"><i class="hl"></i><span class="lbl sx" style="left:4px;color:#000;font-size:12px">Lights</span><span class="lbl sxr" style="right:2px;color:#000;font-size:12px">+L</span></div>
<div class="b" style="left:305px;top:1030px;width:71px;height:17px;background:#a5b4c7;border:1px solid #000;line-height:15px;"><i class="hl"></i><span class="lbl sx" style="left:4px;color:#000;font-size:12px">Cameras</span><span class="lbl sxr" style="right:2px;color:#dfe6f2;font-size:12px">+C</span></div>
<div class="b" style="left:380px;top:1030px;width:95px;height:17px;background:#a8bdbc;border:1px solid #000;line-height:15px;"><i class="hl"></i><span class="lbl sx" style="left:4px;color:#000;font-size:12px">Properties</span><span class="lbl sxr" style="right:2px;color:#e8f0f0;font-size:12px">p</span></div>
<div class="b" style="left:927px;top:992px;width:97px;height:17px;background:#ffffff;border:1px solid #000;line-height:15px;"><i class="hl"></i><span class="lbl sx" style="left:5px;color:#000;font-size:12px">Auto Key</span><span class="lbl sxr" style="right:2px;color:#000;font-size:12px">+F1</span></div>
<div class="b" style="left:927px;top:1011px;width:97px;height:17px;background:#a8bdbc;border:1px solid #000;line-height:15px;"><i class="hl"></i><span class="lbl sx" style="left:5px;color:#000;font-size:12px">Create Key</span><span class="lbl sxr" style="right:2px;color:#e8f0f0;font-size:12px">ret</span></div>
<div class="b" style="left:927px;top:1030px;width:97px;height:17px;background:#a8bdbc;border:1px solid #000;line-height:15px;"><i class="hl"></i><span class="lbl sx" style="left:5px;color:#000;font-size:12px">Delete Key</span><span class="lbl sxr" style="right:2px;color:#e8f0f0;font-size:12px">del</span></div>
<div style="left:170px;top:961px;width:1438px;height:6px;background:linear-gradient(to bottom,#c8c8c8,#b4b4b4)"></div>
<div style="left:1608px;top:961px;width:72px;height:6px;background:#8c8c8c"></div>
<svg style="left:169px;top:966px" width="1441" height="25"><rect x="0" y="0" width="1440" height="24" fill="#525252"/><rect x="0" y="23" width="1440" height="2" fill="#000"/><line x1="41.5" y1="1" x2="41.5" y2="10" stroke="#2a2a2a" stroke-width="1"/><line x1="42.5" y1="1" x2="42.5" y2="10" stroke="#7a7a7a" stroke-width="1"/><line x1="50.5" y1="1" x2="50.5" y2="5" stroke="#2a2a2a" stroke-width="1"/><line x1="51.5" y1="1" x2="51.5" y2="5" stroke="#7a7a7a" stroke-width="1"/><line x1="59.6" y1="1" x2="59.6" y2="5" stroke="#2a2a2a" stroke-width="1"/><line x1="60.6" y1="1" x2="60.6" y2="5" stroke="#7a7a7a" stroke-width="1"/><line x1="68.6" y1="1" x2="68.6" y2="5" stroke="#2a2a2a" stroke-width="1"/><line x1="69.6" y1="1" x2="69.6" y2="5" stroke="#7a7a7a" stroke-width="1"/><line x1="77.6" y1="1" x2="77.6" y2="5" stroke="#2a2a2a" stroke-width="1"/><line x1="78.6" y1="1" x2="78.6" y2="5" stroke="#7a7a7a" stroke-width="1"/><line x1="86.7" y1="1" x2="86.7" y2="8" stroke="#2a2a2a" stroke-width="1"/><line x1="87.7" y1="1" x2="87.7" y2="8" stroke="#7a7a7a" stroke-width="1"/><line x1="95.7" y1="1" x2="95.7" y2="5" stroke="#2a2a2a" stroke-width="1"/><line x1="96.7" y1="1" x2="96.7" y2="5" stroke="#7a7a7a" stroke-width="1"/><line x1="104.8" y1="1" x2="104.8" y2="5" stroke="#2a2a2a" stroke-width="1"/><line x1="105.8" y1="1" x2="105.8" y2="5" stroke="#7a7a7a" stroke-width="1"/><line x1="113.8" y1="1" x2="113.8" y2="5" stroke="#2a2a2a" stroke-width="1"/><line x1="114.8" y1="1" x2="114.8" y2="5" stroke="#7a7a7a" stroke-width="1"/><line x1="122.8" y1="1" x2="122.8" y2="5" stroke="#2a2a2a" stroke-width="1"/><line x1="123.8" y1="1" x2="123.8" y2="5" stroke="#7a7a7a" stroke-width="1"/><line x1="131.9" y1="1" x2="131.9" y2="10" stroke="#2a2a2a" stroke-width="1"/><line x1="132.9" y1="1" x2="132.9" y2="10" stroke="#7a7a7a" stroke-width="1"/><line x1="140.9" y1="1" x2="140.9" y2="5" stroke="#2a2a2a" stroke-width="1"/><line x1="141.9" y1="1" x2="141.9" y2="5" stroke="#7a7a7a" stroke-width="1"/><line x1="149.9" y1="1" x2="149.9" y2="5" stroke="#2a2a2a" stroke-width="1"/><line x1="150.9" y1="1" x2="150.9" y2="5" stroke="#7a7a7a" stroke-width="1"/><line x1="159.0" y1="1" x2="159.0" y2="5" stroke="#2a2a2a" stroke-width="1"/><line x1="160.0" y1="1" x2="160.0" y2="5" stroke="#7a7a7a" stroke-width="1"/><line x1="168.0" y1="1" x2="168.0" y2="5" stroke="#2a2a2a" stroke-width="1"/><line x1="169.0" y1="1" x2="169.0" y2="5" stroke="#7a7a7a" stroke-width="1"/><line x1="177.1" y1="1" x2="177.1" y2="8" stroke="#2a2a2a" stroke-width="1"/><line x1="178.1" y1="1" x2="178.1" y2="8" stroke="#7a7a7a" stroke-width="1"/><line x1="186.1" y1="1" x2="186.1" y2="5" stroke="#2a2a2a" stroke-width="1"/><line x1="187.1" y1="1" x2="187.1" y2="5" stroke="#7a7a7a" stroke-width="1"/><line x1="195.1" y1="1" x2="195.1" y2="5" stroke="#2a2a2a" stroke-width="1"/><line x1="196.1" y1="1" x2="196.1" y2="5" stroke="#7a7a7a" stroke-width="1"/><line x1="204.2" y1="1" x2="204.2" y2="5" stroke="#2a2a2a" stroke-width="1"/><line x1="205.2" y1="1" x2="205.2" y2="5" stroke="#7a7a7a" stroke-width="1"/><line x1="213.2" y1="1" x2="213.2" y2="5" stroke="#2a2a2a" stroke-width="1"/><line x1="214.2" y1="1" x2="214.2" y2="5" stroke="#7a7a7a" stroke-width="1"/><line x1="222.2" y1="1" x2="222.2" y2="10" stroke="#2a2a2a" stroke-width="1"/><line x1="223.2" y1="1" x2="223.2" y2="10" stroke="#7a7a7a" stroke-width="1"/><line x1="231.3" y1="1" x2="231.3" y2="5" stroke="#2a2a2a" stroke-width="1"/><line x1="232.3" y1="1" x2="232.3" y2="5" stroke="#7a7a7a" stroke-width="1"/><line x1="240.3" y1="1" x2="240.3" y2="5" stroke="#2a2a2a" stroke-width="1"/><line x1="241.3" y1="1" x2="241.3" y2="5" stroke="#7a7a7a" stroke-width="1"/><line x1="249.3" y1="1" x2="249.3" y2="5" stroke="#2a2a2a" stroke-width="1"/><line x1="250.3" y1="1" x2="250.3" y2="5" stroke="#7a7a7a" stroke-width="1"/><line x1="258.4" y1="1" x2="258.4" y2="5" stroke="#2a2a2a" stroke-width="1"/><line x1="259.4" y1="1" x2="259.4" y2="5" stroke="#7a7a7a" stroke-width="1"/><line x1="267.4" y1="1" x2="267.4" y2="8" stroke="#2a2a2a" stroke-width="1"/><line x1="268.4" y1="1" x2="268.4" y2="8" stroke="#7a7a7a" stroke-width="1"/><line x1="276.5" y1="1" x2="276.5" y2="5" stroke="#2a2a2a" stroke-width="1"/><line x1="277.5" y1="1" x2="277.5" y2="5" stroke="#7a7a7a" stroke-width="1"/><line x1="285.5" y1="1" x2="285.5" y2="5" stroke="#2a2a2a" stroke-width="1"/><line x1="286.5" y1="1" x2="286.5" y2="5" stroke="#7a7a7a" stroke-width="1"/><line x1="294.5" y1="1" x2="294.5" y2="5" stroke="#2a2a2a" stroke-width="1"/><line x1="295.5" y1="1" x2="295.5" y2="5" stroke="#7a7a7a" stroke-width="1"/><line x1="303.6" y1="1" x2="303.6" y2="5" stroke="#2a2a2a" stroke-width="1"/><line x1="304.6" y1="1" x2="304.6" y2="5" stroke="#7a7a7a" stroke-width="1"/><line x1="312.6" y1="1" x2="312.6" y2="10" stroke="#2a2a2a" stroke-width="1"/><line x1="313.6" y1="1" x2="313.6" y2="10" stroke="#7a7a7a" stroke-width="1"/><line x1="321.6" y1="1" x2="321.6" y2="5" stroke="#2a2a2a" stroke-width="1"/><line x1="322.6" y1="1" x2="322.6" y2="5" stroke="#7a7a7a" stroke-width="1"/><line x1="330.7" y1="1" x2="330.7" y2="5" stroke="#2a2a2a" stroke-width="1"/><line x1="331.7" y1="1" x2="331.7" y2="5" stroke="#7a7a7a" stroke-width="1"/><line x1="339.7" y1="1" x2="339.7" y2="5" stroke="#2a2a2a" stroke-width="1"/><line x1="340.7" y1="1" x2="340.7" y2="5" stroke="#7a7a7a" stroke-width="1"/><line x1="348.7" y1="1" x2="348.7" y2="5" stroke="#2a2a2a" stroke-width="1"/><line x1="349.7" y1="1" x2="349.7" y2="5" stroke="#7a7a7a" stroke-width="1"/><line x1="357.8" y1="1" x2="357.8" y2="8" stroke="#2a2a2a" stroke-width="1"/><line x1="358.8" y1="1" x2="358.8" y2="8" stroke="#7a7a7a" stroke-width="1"/><line x1="366.8" y1="1" x2="366.8" y2="5" stroke="#2a2a2a" stroke-width="1"/><line x1="367.8" y1="1" x2="367.8" y2="5" stroke="#7a7a7a" stroke-width="1"/><line x1="375.9" y1="1" x2="375.9" y2="5" stroke="#2a2a2a" stroke-width="1"/><line x1="376.9" y1="1" x2="376.9" y2="5" stroke="#7a7a7a" stroke-width="1"/><line x1="384.9" y1="1" x2="384.9" y2="5" stroke="#2a2a2a" stroke-width="1"/><line x1="385.9" y1="1" x2="385.9" y2="5" stroke="#7a7a7a" stroke-width="1"/><line x1="393.9" y1="1" x2="393.9" y2="5" stroke="#2a2a2a" stroke-width="1"/><line x1="394.9" y1="1" x2="394.9" y2="5" stroke="#7a7a7a" stroke-width="1"/><line x1="403.0" y1="1" x2="403.0" y2="10" stroke="#2a2a2a" stroke-width="1"/><line x1="404.0" y1="1" x2="404.0" y2="10" stroke="#7a7a7a" stroke-width="1"/><line x1="412.0" y1="1" x2="412.0" y2="5" stroke="#2a2a2a" stroke-width="1"/><line x1="413.0" y1="1" x2="413.0" y2="5" stroke="#7a7a7a" stroke-width="1"/><line x1="421.0" y1="1" x2="421.0" y2="5" stroke="#2a2a2a" stroke-width="1"/><line x1="422.0" y1="1" x2="422.0" y2="5" stroke="#7a7a7a" stroke-width="1"/><line x1="430.1" y1="1" x2="430.1" y2="5" stroke="#2a2a2a" stroke-width="1"/><line x1="431.1" y1="1" x2="431.1" y2="5" stroke="#7a7a7a" stroke-width="1"/><line x1="439.1" y1="1" x2="439.1" y2="5" stroke="#2a2a2a" stroke-width="1"/><line x1="440.1" y1="1" x2="440.1" y2="5" stroke="#7a7a7a" stroke-width="1"/><line x1="448.2" y1="1" x2="448.2" y2="8" stroke="#2a2a2a" stroke-width="1"/><line x1="449.2" y1="1" x2="449.2" y2="8" stroke="#7a7a7a" stroke-width="1"/><line x1="457.2" y1="1" x2="457.2" y2="5" stroke="#2a2a2a" stroke-width="1"/><line x1="458.2" y1="1" x2="458.2" y2="5" stroke="#7a7a7a" stroke-width="1"/><line x1="466.2" y1="1" x2="466.2" y2="5" stroke="#2a2a2a" stroke-width="1"/><line x1="467.2" y1="1" x2="467.2" y2="5" stroke="#7a7a7a" stroke-width="1"/><line x1="475.3" y1="1" x2="475.3" y2="5" stroke="#2a2a2a" stroke-width="1"/><line x1="476.3" y1="1" x2="476.3" y2="5" stroke="#7a7a7a" stroke-width="1"/><line x1="484.3" y1="1" x2="484.3" y2="5" stroke="#2a2a2a" stroke-width="1"/><line x1="485.3" y1="1" x2="485.3" y2="5" stroke="#7a7a7a" stroke-width="1"/><line x1="493.3" y1="1" x2="493.3" y2="10" stroke="#2a2a2a" stroke-width="1"/><line x1="494.3" y1="1" x2="494.3" y2="10" stroke="#7a7a7a" stroke-width="1"/><line x1="502.4" y1="1" x2="502.4" y2="5" stroke="#2a2a2a" stroke-width="1"/><line x1="503.4" y1="1" x2="503.4" y2="5" stroke="#7a7a7a" stroke-width="1"/><line x1="511.4" y1="1" x2="511.4" y2="5" stroke="#2a2a2a" stroke-width="1"/><line x1="512.4" y1="1" x2="512.4" y2="5" stroke="#7a7a7a" stroke-width="1"/><line x1="520.4" y1="1" x2="520.4" y2="5" stroke="#2a2a2a" stroke-width="1"/><line x1="521.4" y1="1" x2="521.4" y2="5" stroke="#7a7a7a" stroke-width="1"/><line x1="529.5" y1="1" x2="529.5" y2="5" stroke="#2a2a2a" stroke-width="1"/><line x1="530.5" y1="1" x2="530.5" y2="5" stroke="#7a7a7a" stroke-width="1"/><line x1="538.5" y1="1" x2="538.5" y2="8" stroke="#2a2a2a" stroke-width="1"/><line x1="539.5" y1="1" x2="539.5" y2="8" stroke="#7a7a7a" stroke-width="1"/><line x1="547.6" y1="1" x2="547.6" y2="5" stroke="#2a2a2a" stroke-width="1"/><line x1="548.6" y1="1" x2="548.6" y2="5" stroke="#7a7a7a" stroke-width="1"/><line x1="556.6" y1="1" x2="556.6" y2="5" stroke="#2a2a2a" stroke-width="1"/><line x1="557.6" y1="1" x2="557.6" y2="5" stroke="#7a7a7a" stroke-width="1"/><line x1="565.6" y1="1" x2="565.6" y2="5" stroke="#2a2a2a" stroke-width="1"/><line x1="566.6" y1="1" x2="566.6" y2="5" stroke="#7a7a7a" stroke-width="1"/><line x1="574.7" y1="1" x2="574.7" y2="5" stroke="#2a2a2a" stroke-width="1"/><line x1="575.7" y1="1" x2="575.7" y2="5" stroke="#7a7a7a" stroke-width="1"/><line x1="583.7" y1="1" x2="583.7" y2="10" stroke="#2a2a2a" stroke-width="1"/><line x1="584.7" y1="1" x2="584.7" y2="10" stroke="#7a7a7a" stroke-width="1"/><line x1="592.7" y1="1" x2="592.7" y2="5" stroke="#2a2a2a" stroke-width="1"/><line x1="593.7" y1="1" x2="593.7" y2="5" stroke="#7a7a7a" stroke-width="1"/><line x1="601.8" y1="1" x2="601.8" y2="5" stroke="#2a2a2a" stroke-width="1"/><line x1="602.8" y1="1" x2="602.8" y2="5" stroke="#7a7a7a" stroke-width="1"/><line x1="610.8" y1="1" x2="610.8" y2="5" stroke="#2a2a2a" stroke-width="1"/><line x1="611.8" y1="1" x2="611.8" y2="5" stroke="#7a7a7a" stroke-width="1"/><line x1="619.8" y1="1" x2="619.8" y2="5" stroke="#2a2a2a" stroke-width="1"/><line x1="620.8" y1="1" x2="620.8" y2="5" stroke="#7a7a7a" stroke-width="1"/><line x1="628.9" y1="1" x2="628.9" y2="8" stroke="#2a2a2a" stroke-width="1"/><line x1="629.9" y1="1" x2="629.9" y2="8" stroke="#7a7a7a" stroke-width="1"/><line x1="637.9" y1="1" x2="637.9" y2="5" stroke="#2a2a2a" stroke-width="1"/><line x1="638.9" y1="1" x2="638.9" y2="5" stroke="#7a7a7a" stroke-width="1"/><line x1="647.0" y1="1" x2="647.0" y2="5" stroke="#2a2a2a" stroke-width="1"/><line x1="648.0" y1="1" x2="648.0" y2="5" stroke="#7a7a7a" stroke-width="1"/><line x1="656.0" y1="1" x2="656.0" y2="5" stroke="#2a2a2a" stroke-width="1"/><line x1="657.0" y1="1" x2="657.0" y2="5" stroke="#7a7a7a" stroke-width="1"/><line x1="665.0" y1="1" x2="665.0" y2="5" stroke="#2a2a2a" stroke-width="1"/><line x1="666.0" y1="1" x2="666.0" y2="5" stroke="#7a7a7a" stroke-width="1"/><line x1="674.1" y1="1" x2="674.1" y2="10" stroke="#2a2a2a" stroke-width="1"/><line x1="675.1" y1="1" x2="675.1" y2="10" stroke="#7a7a7a" stroke-width="1"/><line x1="683.1" y1="1" x2="683.1" y2="5" stroke="#2a2a2a" stroke-width="1"/><line x1="684.1" y1="1" x2="684.1" y2="5" stroke="#7a7a7a" stroke-width="1"/><line x1="692.1" y1="1" x2="692.1" y2="5" stroke="#2a2a2a" stroke-width="1"/><line x1="693.1" y1="1" x2="693.1" y2="5" stroke="#7a7a7a" stroke-width="1"/><line x1="701.2" y1="1" x2="701.2" y2="5" stroke="#2a2a2a" stroke-width="1"/><line x1="702.2" y1="1" x2="702.2" y2="5" stroke="#7a7a7a" stroke-width="1"/><line x1="710.2" y1="1" x2="710.2" y2="5" stroke="#2a2a2a" stroke-width="1"/><line x1="711.2" y1="1" x2="711.2" y2="5" stroke="#7a7a7a" stroke-width="1"/><line x1="719.2" y1="1" x2="719.2" y2="8" stroke="#2a2a2a" stroke-width="1"/><line x1="720.2" y1="1" x2="720.2" y2="8" stroke="#7a7a7a" stroke-width="1"/><line x1="728.3" y1="1" x2="728.3" y2="5" stroke="#2a2a2a" stroke-width="1"/><line x1="729.3" y1="1" x2="729.3" y2="5" stroke="#7a7a7a" stroke-width="1"/><line x1="737.3" y1="1" x2="737.3" y2="5" stroke="#2a2a2a" stroke-width="1"/><line x1="738.3" y1="1" x2="738.3" y2="5" stroke="#7a7a7a" stroke-width="1"/><line x1="746.4" y1="1" x2="746.4" y2="5" stroke="#2a2a2a" stroke-width="1"/><line x1="747.4" y1="1" x2="747.4" y2="5" stroke="#7a7a7a" stroke-width="1"/><line x1="755.4" y1="1" x2="755.4" y2="5" stroke="#2a2a2a" stroke-width="1"/><line x1="756.4" y1="1" x2="756.4" y2="5" stroke="#7a7a7a" stroke-width="1"/><line x1="764.4" y1="1" x2="764.4" y2="10" stroke="#2a2a2a" stroke-width="1"/><line x1="765.4" y1="1" x2="765.4" y2="10" stroke="#7a7a7a" stroke-width="1"/><line x1="773.5" y1="1" x2="773.5" y2="5" stroke="#2a2a2a" stroke-width="1"/><line x1="774.5" y1="1" x2="774.5" y2="5" stroke="#7a7a7a" stroke-width="1"/><line x1="782.5" y1="1" x2="782.5" y2="5" stroke="#2a2a2a" stroke-width="1"/><line x1="783.5" y1="1" x2="783.5" y2="5" stroke="#7a7a7a" stroke-width="1"/><line x1="791.5" y1="1" x2="791.5" y2="5" stroke="#2a2a2a" stroke-width="1"/><line x1="792.5" y1="1" x2="792.5" y2="5" stroke="#7a7a7a" stroke-width="1"/><line x1="800.6" y1="1" x2="800.6" y2="5" stroke="#2a2a2a" stroke-width="1"/><line x1="801.6" y1="1" x2="801.6" y2="5" stroke="#7a7a7a" stroke-width="1"/><line x1="809.6" y1="1" x2="809.6" y2="8" stroke="#2a2a2a" stroke-width="1"/><line x1="810.6" y1="1" x2="810.6" y2="8" stroke="#7a7a7a" stroke-width="1"/><line x1="818.7" y1="1" x2="818.7" y2="5" stroke="#2a2a2a" stroke-width="1"/><line x1="819.7" y1="1" x2="819.7" y2="5" stroke="#7a7a7a" stroke-width="1"/><line x1="827.7" y1="1" x2="827.7" y2="5" stroke="#2a2a2a" stroke-width="1"/><line x1="828.7" y1="1" x2="828.7" y2="5" stroke="#7a7a7a" stroke-width="1"/><line x1="836.7" y1="1" x2="836.7" y2="5" stroke="#2a2a2a" stroke-width="1"/><line x1="837.7" y1="1" x2="837.7" y2="5" stroke="#7a7a7a" stroke-width="1"/><line x1="845.8" y1="1" x2="845.8" y2="5" stroke="#2a2a2a" stroke-width="1"/><line x1="846.8" y1="1" x2="846.8" y2="5" stroke="#7a7a7a" stroke-width="1"/><line x1="854.8" y1="1" x2="854.8" y2="10" stroke="#2a2a2a" stroke-width="1"/><line x1="855.8" y1="1" x2="855.8" y2="10" stroke="#7a7a7a" stroke-width="1"/><line x1="863.8" y1="1" x2="863.8" y2="5" stroke="#2a2a2a" stroke-width="1"/><line x1="864.8" y1="1" x2="864.8" y2="5" stroke="#7a7a7a" stroke-width="1"/><line x1="872.9" y1="1" x2="872.9" y2="5" stroke="#2a2a2a" stroke-width="1"/><line x1="873.9" y1="1" x2="873.9" y2="5" stroke="#7a7a7a" stroke-width="1"/><line x1="881.9" y1="1" x2="881.9" y2="5" stroke="#2a2a2a" stroke-width="1"/><line x1="882.9" y1="1" x2="882.9" y2="5" stroke="#7a7a7a" stroke-width="1"/><line x1="890.9" y1="1" x2="890.9" y2="5" stroke="#2a2a2a" stroke-width="1"/><line x1="891.9" y1="1" x2="891.9" y2="5" stroke="#7a7a7a" stroke-width="1"/><line x1="900.0" y1="1" x2="900.0" y2="8" stroke="#2a2a2a" stroke-width="1"/><line x1="901.0" y1="1" x2="901.0" y2="8" stroke="#7a7a7a" stroke-width="1"/><line x1="909.0" y1="1" x2="909.0" y2="5" stroke="#2a2a2a" stroke-width="1"/><line x1="910.0" y1="1" x2="910.0" y2="5" stroke="#7a7a7a" stroke-width="1"/><line x1="918.1" y1="1" x2="918.1" y2="5" stroke="#2a2a2a" stroke-width="1"/><line x1="919.1" y1="1" x2="919.1" y2="5" stroke="#7a7a7a" stroke-width="1"/><line x1="927.1" y1="1" x2="927.1" y2="5" stroke="#2a2a2a" stroke-width="1"/><line x1="928.1" y1="1" x2="928.1" y2="5" stroke="#7a7a7a" stroke-width="1"/><line x1="936.1" y1="1" x2="936.1" y2="5" stroke="#2a2a2a" stroke-width="1"/><line x1="937.1" y1="1" x2="937.1" y2="5" stroke="#7a7a7a" stroke-width="1"/><line x1="945.2" y1="1" x2="945.2" y2="10" stroke="#2a2a2a" stroke-width="1"/><line x1="946.2" y1="1" x2="946.2" y2="10" stroke="#7a7a7a" stroke-width="1"/><line x1="954.2" y1="1" x2="954.2" y2="5" stroke="#2a2a2a" stroke-width="1"/><line x1="955.2" y1="1" x2="955.2" y2="5" stroke="#7a7a7a" stroke-width="1"/><line x1="963.2" y1="1" x2="963.2" y2="5" stroke="#2a2a2a" stroke-width="1"/><line x1="964.2" y1="1" x2="964.2" y2="5" stroke="#7a7a7a" stroke-width="1"/><line x1="972.3" y1="1" x2="972.3" y2="5" stroke="#2a2a2a" stroke-width="1"/><line x1="973.3" y1="1" x2="973.3" y2="5" stroke="#7a7a7a" stroke-width="1"/><line x1="981.3" y1="1" x2="981.3" y2="5" stroke="#2a2a2a" stroke-width="1"/><line x1="982.3" y1="1" x2="982.3" y2="5" stroke="#7a7a7a" stroke-width="1"/><line x1="990.4" y1="1" x2="990.4" y2="8" stroke="#2a2a2a" stroke-width="1"/><line x1="991.4" y1="1" x2="991.4" y2="8" stroke="#7a7a7a" stroke-width="1"/><line x1="999.4" y1="1" x2="999.4" y2="5" stroke="#2a2a2a" stroke-width="1"/><line x1="1000.4" y1="1" x2="1000.4" y2="5" stroke="#7a7a7a" stroke-width="1"/><line x1="1008.4" y1="1" x2="1008.4" y2="5" stroke="#2a2a2a" stroke-width="1"/><line x1="1009.4" y1="1" x2="1009.4" y2="5" stroke="#7a7a7a" stroke-width="1"/><line x1="1017.5" y1="1" x2="1017.5" y2="5" stroke="#2a2a2a" stroke-width="1"/><line x1="1018.5" y1="1" x2="1018.5" y2="5" stroke="#7a7a7a" stroke-width="1"/><line x1="1026.5" y1="1" x2="1026.5" y2="5" stroke="#2a2a2a" stroke-width="1"/><line x1="1027.5" y1="1" x2="1027.5" y2="5" stroke="#7a7a7a" stroke-width="1"/><line x1="1035.5" y1="1" x2="1035.5" y2="10" stroke="#2a2a2a" stroke-width="1"/><line x1="1036.5" y1="1" x2="1036.5" y2="10" stroke="#7a7a7a" stroke-width="1"/><line x1="1044.6" y1="1" x2="1044.6" y2="5" stroke="#2a2a2a" stroke-width="1"/><line x1="1045.6" y1="1" x2="1045.6" y2="5" stroke="#7a7a7a" stroke-width="1"/><line x1="1053.6" y1="1" x2="1053.6" y2="5" stroke="#2a2a2a" stroke-width="1"/><line x1="1054.6" y1="1" x2="1054.6" y2="5" stroke="#7a7a7a" stroke-width="1"/><line x1="1062.6" y1="1" x2="1062.6" y2="5" stroke="#2a2a2a" stroke-width="1"/><line x1="1063.6" y1="1" x2="1063.6" y2="5" stroke="#7a7a7a" stroke-width="1"/><line x1="1071.7" y1="1" x2="1071.7" y2="5" stroke="#2a2a2a" stroke-width="1"/><line x1="1072.7" y1="1" x2="1072.7" y2="5" stroke="#7a7a7a" stroke-width="1"/><line x1="1080.7" y1="1" x2="1080.7" y2="8" stroke="#2a2a2a" stroke-width="1"/><line x1="1081.7" y1="1" x2="1081.7" y2="8" stroke="#7a7a7a" stroke-width="1"/><line x1="1089.8" y1="1" x2="1089.8" y2="5" stroke="#2a2a2a" stroke-width="1"/><line x1="1090.8" y1="1" x2="1090.8" y2="5" stroke="#7a7a7a" stroke-width="1"/><line x1="1098.8" y1="1" x2="1098.8" y2="5" stroke="#2a2a2a" stroke-width="1"/><line x1="1099.8" y1="1" x2="1099.8" y2="5" stroke="#7a7a7a" stroke-width="1"/><line x1="1107.8" y1="1" x2="1107.8" y2="5" stroke="#2a2a2a" stroke-width="1"/><line x1="1108.8" y1="1" x2="1108.8" y2="5" stroke="#7a7a7a" stroke-width="1"/><line x1="1116.9" y1="1" x2="1116.9" y2="5" stroke="#2a2a2a" stroke-width="1"/><line x1="1117.9" y1="1" x2="1117.9" y2="5" stroke="#7a7a7a" stroke-width="1"/><line x1="1125.9" y1="1" x2="1125.9" y2="10" stroke="#2a2a2a" stroke-width="1"/><line x1="1126.9" y1="1" x2="1126.9" y2="10" stroke="#7a7a7a" stroke-width="1"/><line x1="1134.9" y1="1" x2="1134.9" y2="5" stroke="#2a2a2a" stroke-width="1"/><line x1="1135.9" y1="1" x2="1135.9" y2="5" stroke="#7a7a7a" stroke-width="1"/><line x1="1144.0" y1="1" x2="1144.0" y2="5" stroke="#2a2a2a" stroke-width="1"/><line x1="1145.0" y1="1" x2="1145.0" y2="5" stroke="#7a7a7a" stroke-width="1"/><line x1="1153.0" y1="1" x2="1153.0" y2="5" stroke="#2a2a2a" stroke-width="1"/><line x1="1154.0" y1="1" x2="1154.0" y2="5" stroke="#7a7a7a" stroke-width="1"/><line x1="1162.0" y1="1" x2="1162.0" y2="5" stroke="#2a2a2a" stroke-width="1"/><line x1="1163.0" y1="1" x2="1163.0" y2="5" stroke="#7a7a7a" stroke-width="1"/><line x1="1171.1" y1="1" x2="1171.1" y2="8" stroke="#2a2a2a" stroke-width="1"/><line x1="1172.1" y1="1" x2="1172.1" y2="8" stroke="#7a7a7a" stroke-width="1"/><line x1="1180.1" y1="1" x2="1180.1" y2="5" stroke="#2a2a2a" stroke-width="1"/><line x1="1181.1" y1="1" x2="1181.1" y2="5" stroke="#7a7a7a" stroke-width="1"/><line x1="1189.2" y1="1" x2="1189.2" y2="5" stroke="#2a2a2a" stroke-width="1"/><line x1="1190.2" y1="1" x2="1190.2" y2="5" stroke="#7a7a7a" stroke-width="1"/><line x1="1198.2" y1="1" x2="1198.2" y2="5" stroke="#2a2a2a" stroke-width="1"/><line x1="1199.2" y1="1" x2="1199.2" y2="5" stroke="#7a7a7a" stroke-width="1"/><line x1="1207.2" y1="1" x2="1207.2" y2="5" stroke="#2a2a2a" stroke-width="1"/><line x1="1208.2" y1="1" x2="1208.2" y2="5" stroke="#7a7a7a" stroke-width="1"/><line x1="1216.3" y1="1" x2="1216.3" y2="10" stroke="#2a2a2a" stroke-width="1"/><line x1="1217.3" y1="1" x2="1217.3" y2="10" stroke="#7a7a7a" stroke-width="1"/><line x1="1225.3" y1="1" x2="1225.3" y2="5" stroke="#2a2a2a" stroke-width="1"/><line x1="1226.3" y1="1" x2="1226.3" y2="5" stroke="#7a7a7a" stroke-width="1"/><line x1="1234.3" y1="1" x2="1234.3" y2="5" stroke="#2a2a2a" stroke-width="1"/><line x1="1235.3" y1="1" x2="1235.3" y2="5" stroke="#7a7a7a" stroke-width="1"/><line x1="1243.4" y1="1" x2="1243.4" y2="5" stroke="#2a2a2a" stroke-width="1"/><line x1="1244.4" y1="1" x2="1244.4" y2="5" stroke="#7a7a7a" stroke-width="1"/><line x1="1252.4" y1="1" x2="1252.4" y2="5" stroke="#2a2a2a" stroke-width="1"/><line x1="1253.4" y1="1" x2="1253.4" y2="5" stroke="#7a7a7a" stroke-width="1"/><line x1="1261.5" y1="1" x2="1261.5" y2="8" stroke="#2a2a2a" stroke-width="1"/><line x1="1262.5" y1="1" x2="1262.5" y2="8" stroke="#7a7a7a" stroke-width="1"/><line x1="1270.5" y1="1" x2="1270.5" y2="5" stroke="#2a2a2a" stroke-width="1"/><line x1="1271.5" y1="1" x2="1271.5" y2="5" stroke="#7a7a7a" stroke-width="1"/><line x1="1279.5" y1="1" x2="1279.5" y2="5" stroke="#2a2a2a" stroke-width="1"/><line x1="1280.5" y1="1" x2="1280.5" y2="5" stroke="#7a7a7a" stroke-width="1"/><line x1="1288.6" y1="1" x2="1288.6" y2="5" stroke="#2a2a2a" stroke-width="1"/><line x1="1289.6" y1="1" x2="1289.6" y2="5" stroke="#7a7a7a" stroke-width="1"/><line x1="1297.6" y1="1" x2="1297.6" y2="5" stroke="#2a2a2a" stroke-width="1"/><line x1="1298.6" y1="1" x2="1298.6" y2="5" stroke="#7a7a7a" stroke-width="1"/><line x1="1306.6" y1="1" x2="1306.6" y2="10" stroke="#2a2a2a" stroke-width="1"/><line x1="1307.6" y1="1" x2="1307.6" y2="10" stroke="#7a7a7a" stroke-width="1"/><line x1="1315.7" y1="1" x2="1315.7" y2="5" stroke="#2a2a2a" stroke-width="1"/><line x1="1316.7" y1="1" x2="1316.7" y2="5" stroke="#7a7a7a" stroke-width="1"/><line x1="1324.7" y1="1" x2="1324.7" y2="5" stroke="#2a2a2a" stroke-width="1"/><line x1="1325.7" y1="1" x2="1325.7" y2="5" stroke="#7a7a7a" stroke-width="1"/><line x1="1333.7" y1="1" x2="1333.7" y2="5" stroke="#2a2a2a" stroke-width="1"/><line x1="1334.7" y1="1" x2="1334.7" y2="5" stroke="#7a7a7a" stroke-width="1"/><line x1="1342.8" y1="1" x2="1342.8" y2="5" stroke="#2a2a2a" stroke-width="1"/><line x1="1343.8" y1="1" x2="1343.8" y2="5" stroke="#7a7a7a" stroke-width="1"/><line x1="1351.8" y1="1" x2="1351.8" y2="8" stroke="#2a2a2a" stroke-width="1"/><line x1="1352.8" y1="1" x2="1352.8" y2="8" stroke="#7a7a7a" stroke-width="1"/><line x1="1360.9" y1="1" x2="1360.9" y2="5" stroke="#2a2a2a" stroke-width="1"/><line x1="1361.9" y1="1" x2="1361.9" y2="5" stroke="#7a7a7a" stroke-width="1"/><line x1="1369.9" y1="1" x2="1369.9" y2="5" stroke="#2a2a2a" stroke-width="1"/><line x1="1370.9" y1="1" x2="1370.9" y2="5" stroke="#7a7a7a" stroke-width="1"/><line x1="1378.9" y1="1" x2="1378.9" y2="5" stroke="#2a2a2a" stroke-width="1"/><line x1="1379.9" y1="1" x2="1379.9" y2="5" stroke="#7a7a7a" stroke-width="1"/><line x1="1388.0" y1="1" x2="1388.0" y2="5" stroke="#2a2a2a" stroke-width="1"/><line x1="1389.0" y1="1" x2="1389.0" y2="5" stroke="#7a7a7a" stroke-width="1"/><line x1="1397.0" y1="1" x2="1397.0" y2="10" stroke="#2a2a2a" stroke-width="1"/><line x1="1398.0" y1="1" x2="1398.0" y2="10" stroke="#7a7a7a" stroke-width="1"/><text transform="translate(131.9,0) scale(.88,1)" x="0" y="20" text-anchor="middle" font-family="Liberation Sans" font-size="12" fill="#e4e4e4">10.00</text><text transform="translate(222.2,0) scale(.88,1)" x="0" y="20" text-anchor="middle" font-family="Liberation Sans" font-size="12" fill="#e4e4e4">20.00</text><text transform="translate(312.6,0) scale(.88,1)" x="0" y="20" text-anchor="middle" font-family="Liberation Sans" font-size="12" fill="#e4e4e4">30.00</text><text transform="translate(403.0,0) scale(.88,1)" x="0" y="20" text-anchor="middle" font-family="Liberation Sans" font-size="12" fill="#e4e4e4">40.00</text><text transform="translate(493.3,0) scale(.88,1)" x="0" y="20" text-anchor="middle" font-family="Liberation Sans" font-size="12" fill="#e4e4e4">50.00</text><text transform="translate(583.7,0) scale(.88,1)" x="0" y="20" text-anchor="middle" font-family="Liberation Sans" font-size="12" fill="#e4e4e4">60.00</text><text transform="translate(674.1,0) scale(.88,1)" x="0" y="20" text-anchor="middle" font-family="Liberation Sans" font-size="12" fill="#e4e4e4">70.00</text><text transform="translate(764.4,0) scale(.88,1)" x="0" y="20" text-anchor="middle" font-family="Liberation Sans" font-size="12" fill="#e4e4e4">80.00</text><text transform="translate(854.8,0) scale(.88,1)" x="0" y="20" text-anchor="middle" font-family="Liberation Sans" font-size="12" fill="#e4e4e4">90.00</text><text transform="translate(945.2,0) scale(.88,1)" x="0" y="20" text-anchor="middle" font-family="Liberation Sans" font-size="12" fill="#e4e4e4">100.00</text><text transform="translate(1035.5,0) scale(.88,1)" x="0" y="20" text-anchor="middle" font-family="Liberation Sans" font-size="12" fill="#e4e4e4">110.00</text><text transform="translate(1125.9,0) scale(.88,1)" x="0" y="20" text-anchor="middle" font-family="Liberation Sans" font-size="12" fill="#e4e4e4">120.00</text><text transform="translate(1216.3,0) scale(.88,1)" x="0" y="20" text-anchor="middle" font-family="Liberation Sans" font-size="12" fill="#e4e4e4">130.00</text><text transform="translate(1306.6,0) scale(.88,1)" x="0" y="20" text-anchor="middle" font-family="Liberation Sans" font-size="12" fill="#e4e4e4">140.00</text><text transform="translate(1397.0,0) scale(.88,1)" x="0" y="20" text-anchor="middle" font-family="Liberation Sans" font-size="12" fill="#e4e4e4">150.00</text></svg>
<div style="left:171px;top:975px;width:79px;height:13px;background:#aac0be;border-right:1px solid #e0e8e8;line-height:12px;font-size:12px;color:#000"><span class="sxc" style="left:0;right:0;top:0;text-align:center">0.00</span></div>
<svg style="left:205px;top:967px" width="10" height="8"><polygon points="5,0 9,7 1,7" fill="#e0e0e0"/></svg>
<div style="left:1610px;top:973px;width:70px;height:17px;background:#4e4e4e;border:1px solid #000;line-height:15px;color:#c8d4ee;font-size:12px;white-space:nowrap;overflow:hidden;"><span class="sx" style="left:6px;top:1px">150</span></div>
<div style="left:1475px;top:992px;width:34px;height:17px;background:#a5b4c7;border:1px solid #000"></div>
<div style="left:1508px;top:992px;width:37px;height:17px;background:#a5b4c7;border:1px solid #000"></div>
<div style="left:1544px;top:992px;width:34px;height:17px;background:#a5b4c7;border:1px solid #000"></div>
<div style="left:1577px;top:992px;width:34px;height:17px;background:#a5b4c7;border:1px solid #000"></div>
<div style="left:1610px;top:992px;width:37px;height:17px;background:#a5b4c7;border:1px solid #000"></div>
<div style="left:1646px;top:992px;width:34px;height:17px;background:#a5b4c7;border:1px solid #000"></div>
<svg style="left:0;top:0" width="1683" height="1047"><g fill="#000"><rect x="1483" y="997.0" width="2" height="7"/><polygon points="1485.5,1000.5 1492.5,997.0 1492.5,1004.0"/><polygon points="1493,1000.5 1500,997.0 1500,1004.0"/><polygon points="1524,1000.5 1531,997.0 1531,1004.0"/><polygon points="1531.5,1000.5 1538.5,997.0 1538.5,1004.0"/><polygon points="1553,1000.5 1560,997.0 1560,1004.0"/><rect x="1561.5" y="997.0" width="2" height="7"/><rect x="1565.5" y="997.0" width="2" height="7"/><rect x="1585" y="997.0" width="2" height="7"/><rect x="1589" y="997.0" width="2" height="7"/><polygon points="1593,997.0 1593,1004.0 1600,1000.5"/><polygon points="1616,997.0 1616,1004.0 1623,1000.5"/><polygon points="1623.5,997.0 1623.5,1004.0 1630.5,1000.5"/><polygon points="1654,997.0 1654,1004.0 1661,1000.5"/><polygon points="1661,997.0 1661,1004.0 1668,1000.5"/><rect x="1668.5" y="997.0" width="2" height="7"/></g><path d="M1514,1000.5 H1521 M1517.5,997 V1004 M1634,1000.5 H1641 M1637.5,997 V1004" stroke="#d4dce8" stroke-width="1"/></svg>
<div class="b" style="left:1475px;top:1011px;width:99px;height:17px;background:#b4b4b4;border:1px solid #000;line-height:15px;"><i class="hl"></i><span class="lbl sx" style="left:5px;color:#000;font-size:12px">Preview</span><svg class="a" style="right:5px;top:5.0px" width="9" height="5"><polygon points="0,0 9,0 4.5,5" fill="#000"/></svg></div>
<div style="left:1577px;top:1011px;width:34px;height:17px;background:#a5b4c7;border:1px solid #000"></div>
<div style="left:1610px;top:1011px;width:37px;height:17px;background:#ffffff;border:1px solid #000"></div>
<div style="left:1646px;top:1011px;width:34px;height:17px;background:#a5b4c7;border:1px solid #000"></div>
<svg style="left:0;top:0" width="1683" height="1047"><g fill="#000"><polygon points="1591,1019 1598,1015.5 1598,1022.5"/><rect x="1625" y="1015.5" width="2" height="7"/><rect x="1629.5" y="1015.5" width="2" height="7"/><polygon points="1659,1015.5 1659,1022.5 1666,1019"/></g></svg>
<div class="b" style="left:1475px;top:1030px;width:49px;height:17px;background:#a5b4c7;border:1px solid #000;line-height:15px;"><i class="hl"></i><span class="lbl sx" style="left:5px;color:#d8e0ea;font-size:12px">Undo</span></div>
<div class="b" style="left:1528px;top:1030px;width:46px;height:17px;background:#a5b4c7;border:1px solid #000;line-height:15px;"><i class="hl"></i><span class="lbl sx" style="left:5px;color:#d8e0ea;font-size:12px">Redo</span></div>
<div class="t sx" style="left:1582px;top:1032px;font-size:12px">Step</div>
<div style="left:1610px;top:1030px;width:70px;height:17px;background:#4e4e4e;border:1px solid #000;line-height:15px;color:#c8d4ee;font-size:12px;white-space:nowrap;overflow:hidden;"><span class="sx" style="left:6px;top:1px">1</span></div>
<div style="left:677px;top:57px;width:405px;height:465px;background:#8f8f8f;border-top:2px solid #f2f2ee;border-left:2px solid #f2f2ee;border-right:2px solid #e8e8e4;border-bottom:2px solid #e8e8e4;box-shadow:1px 1px 0 #505050"></div>
<div style="left:679px;top:59px;width:401px;height:20px;background:linear-gradient(to right,#7e7e7e,#c2c2c2)"></div>
<svg style="left:682px;top:61px" width="16" height="16" viewBox="0 0 16 16">
<defs><clipPath id="ic682_61"><rect x="0" y="0" width="16" height="16"/></clipPath></defs>
<g clip-path="url(#ic682_61)">
<rect x="0" y="0" width="16" height="16" fill="#cc1010"/>
<g fill="#f6e6c4"><polygon points="11.5,1 10.2,5.5 13,5.2"/><polygon points="6,3.8 8,8.2 9.8,6.6"/><polygon points="1.8,8.5 5.4,10.8 6.2,8.8"/><polygon points="0.8,14.5 4.8,14.2 4.6,12.2"/></g>
<circle cx="13.6" cy="13.6" r="7.2" fill="none" stroke="#f6eccc" stroke-width="2.8"/>
<circle cx="13.6" cy="13.6" r="3.4" fill="none" stroke="#f6eccc" stroke-width="1.8"/>
</g></svg>
<div class="t" style="left:700px;top:62px;font-weight:bold;font-size:11.6px;color:#dcd8d0">Effects</div>
<div style="left:1028px;top:62px;width:16px;height:14px;background:#d4d0c8;border-top:1px solid #fff;border-left:1px solid #fff;border-right:1px solid #404040;border-bottom:1px solid #404040;box-shadow:inset -1px -1px 0 #808080"><div style="left:4px;top:9px;width:6px;height:2px;background:#000"></div></div>
<div style="left:1044px;top:62px;width:16px;height:14px;background:#d4d0c8;border-top:1px solid #fff;border-left:1px solid #fff;border-right:1px solid #404040;border-bottom:1px solid #404040;box-shadow:inset -1px -1px 0 #808080"><div style="left:3px;top:2px;width:9px;height:8px;border:1px solid #777;border-top-width:2px;box-shadow:1px 1px 0 #fff"></div></div>
<div style="left:1062px;top:62px;width:16px;height:14px;background:#d4d0c8;border-top:1px solid #fff;border-left:1px solid #fff;border-right:1px solid #404040;border-bottom:1px solid #404040;box-shadow:inset -1px -1px 0 #808080"><svg style="left:4px;top:3px" width="9" height="8"><path d="M1,0.5 L8,7.5 M8,0.5 L1,7.5" stroke="#000" stroke-width="1.8"/></svg></div>
<div style="left:680px;top:79px;width:400px;height:441px;background:#8f8f8f;border:1px solid #000"></div>
<svg style="left:681px;top:88px" width="398" height="20"><polygon points="145,19 145,2 211,2 226,19" fill="#acacac"/><line x1="145" y1="1.5" x2="212" y2="1.5" stroke="#6e6e6e" stroke-width="1"/><line x1="145.5" y1="2" x2="145.5" y2="19" stroke="#d8d8d8" stroke-width="1"/><line x1="145" y1="2.5" x2="211" y2="2.5" stroke="#d8d8d8" stroke-width="1"/><line x1="211.5" y1="2" x2="226.5" y2="19" stroke="#6a6a6a" stroke-width="2"/><line x1="210" y1="3" x2="224.5" y2="19" stroke="#c8c8c8" stroke-width="1"/><text transform="translate(154,0) scale(.88,1)" x="0" y="14.94" font-family="Liberation Sans" font-size="12" fill="#000">Compositing</text><polygon points="73,19 73,2 137,2 152,19" fill="#acacac"/><line x1="73" y1="1.5" x2="138" y2="1.5" stroke="#6e6e6e" stroke-width="1"/><line x1="73.5" y1="2" x2="73.5" y2="19" stroke="#d8d8d8" stroke-width="1"/><line x1="73" y1="2.5" x2="137" y2="2.5" stroke="#d8d8d8" stroke-width="1"/><line x1="137.5" y1="2" x2="152.5" y2="19" stroke="#6a6a6a" stroke-width="2"/><line x1="136" y1="3" x2="150.5" y2="19" stroke="#c8c8c8" stroke-width="1"/><text transform="translate(81,0) scale(.88,1)" x="0" y="14.94" font-family="Liberation Sans" font-size="12" fill="#000">Volumetrics</text><polygon points="7,19 7,2 63,2 78,19" fill="#acacac"/><line x1="7" y1="1.5" x2="64" y2="1.5" stroke="#6e6e6e" stroke-width="1"/><line x1="7.5" y1="2" x2="7.5" y2="19" stroke="#d8d8d8" stroke-width="1"/><line x1="7" y1="2.5" x2="63" y2="2.5" stroke="#d8d8d8" stroke-width="1"/><line x1="63.5" y1="2" x2="78.5" y2="19" stroke="#6a6a6a" stroke-width="2"/><line x1="62" y1="3" x2="76.5" y2="19" stroke="#c8c8c8" stroke-width="1"/><text transform="translate(16,0) scale(.88,1)" x="0" y="14.94" font-family="Liberation Sans" font-size="12" fill="#000">Backdrop</text><polygon points="221,19 221,2 282,2 297,19" fill="#ffffff"/><text transform="translate(229,0) scale(.88,1)" x="0" y="14.94" font-family="Liberation Sans" font-size="12" fill="#000">Processing</text></svg>
<div style="left:681px;top:108px;width:398px;height:1px;background:#c4c4c4"></div>
<div style="left:838px;top:115px;width:145px;height:19px;background:#a5b4c7;border:1px solid #000;line-height:17px;overflow:hidden"><div style="left:0;top:0;width:21px;height:17px;background:#a5b4c7;border-right:1px solid #000"></div><span class="lbl sx" style="left:25px;color:#000">Limit Dynamic Range</span></div>
<div class="t sxr" style="right:851px;top:140px;color:#000;font-size:12px">Dither Intensity</div>
<div class="b" style="left:838px;top:137px;width:145px;height:19px;background:#b8b8b8;border:1px solid #000;line-height:17px;"><i class="hl"></i><span class="lbl sx" style="left:5px;color:#000;font-size:12px">Normal</span><svg class="a" style="right:5px;top:6.0px" width="9" height="5"><polygon points="0,0 9,0 4.5,5" fill="#000"/></svg></div>
<div style="left:838px;top:159px;width:145px;height:19px;background:#a5b4c7;border:1px solid #000;line-height:17px;overflow:hidden"><div style="left:0;top:0;width:21px;height:17px;background:#a5b4c7;border-right:1px solid #000"></div><span class="lbl sx" style="left:25px;color:#000">Animated Dither</span></div>
<div class="t sxr" style="right:851px;top:184px;color:#000;font-size:12px">Color Saturation</div>
<div style="left:838px;top:181px;width:103px;height:19px;background:#4e4e4e;border:1px solid #000;line-height:17px;color:#c8d4ee;font-size:12px;white-space:nowrap;overflow:hidden;"><span class="sx" style="left:5px;top:1px">100.0 %</span></div>
<div style="left:942px;top:181px;width:19px;height:19px;background:#b0b0b0;border:1px solid #000;box-shadow:inset 1px 1px 0 #d8d8d8"><svg style="left:3px;top:3px" width="11" height="10"><polygon points="0,5 5,0 5,10" fill="#000"/><polygon points="6,0 11,5 6,10" fill="#000"/></svg></div>
<div style="left:963px;top:181px;width:20px;height:19px;background:#a8bdbc;border:1px solid #000;text-align:center;line-height:17px;color:#000;font-size:12px">E</div>
<div style="left:681px;top:206px;width:398px;height:1px;background:#000"></div>
<div style="left:681px;top:207px;width:398px;height:1px;background:#b4b4b4"></div>
<div style="left:688px;top:213px;width:95px;height:19px;background:#a5b4c7;border:1px solid #000;line-height:17px;overflow:hidden"><div style="left:0;top:0;width:21px;height:17px;background:#a5b4c7;border-right:1px solid #000"></div><span class="lbl sx" style="left:25px;color:#000">Enable Glow</span></div>
<div class="t sxr" style="right:851px;top:216px;color:#626262;font-size:12px">Intensity</div>
<div style="left:838px;top:213px;width:103px;height:19px;background:#4e4e4e;border:1px solid #000;line-height:17px;color:#9aa0aa;font-size:12px;white-space:nowrap;overflow:hidden;"><span class="sx" style="left:5px;top:1px">50.0 %</span></div>
<div style="left:942px;top:213px;width:19px;height:19px;background:#b0b0b0;border:1px solid #000;box-shadow:inset 1px 1px 0 #d8d8d8"><svg style="left:3px;top:3px" width="11" height="10"><polygon points="0,5 5,0 5,10" fill="#8e8e8e"/><polygon points="6,0 11,5 6,10" fill="#969696"/><path d="M5.5,0 V10 M7,9 L10.5,5.5" stroke="#f0f0f0" stroke-width="1"/></svg></div>
<div style="left:963px;top:213px;width:20px;height:19px;background:#a8bdbc;border:1px solid #000;text-align:center;line-height:17px;color:#e0ecec;font-size:12px">E</div>
<div class="t sxr" style="right:851px;top:238px;color:#626262;font-size:12px">Glow Radius</div>
<div style="left:838px;top:235px;width:103px;height:19px;background:#4e4e4e;border:1px solid #000;line-height:17px;color:#9aa0aa;font-size:12px;white-space:nowrap;overflow:hidden;"><span class="sx" style="left:5px;top:1px">8.0 pixels</span></div>
<div style="left:942px;top:235px;width:19px;height:19px;background:#b0b0b0;border:1px solid #000;box-shadow:inset 1px 1px 0 #d8d8d8"><svg style="left:3px;top:3px" width="11" height="10"><polygon points="0,5 5,0 5,10" fill="#8e8e8e"/><polygon points="6,0 11,5 6,10" fill="#969696"/><path d="M5.5,0 V10 M7,9 L10.5,5.5" stroke="#f0f0f0" stroke-width="1"/></svg></div>
<div style="left:963px;top:235px;width:20px;height:19px;background:#a8bdbc;border:1px solid #000;text-align:center;line-height:17px;color:#e0ecec;font-size:12px">E</div>
<div style="left:681px;top:260px;width:398px;height:1px;background:#000"></div>
<div style="left:681px;top:261px;width:398px;height:1px;background:#b4b4b4"></div>
<div class="b" style="left:688px;top:267px;width:310px;height:19px;background:#b4b4b4;border:1px solid #000;line-height:17px;"><i class="hl"></i><span class="lbl sx" style="left:4px;color:#000;font-size:12px">Add Pixel Filter</span><svg class="a" style="right:5px;top:6.0px" width="9" height="5"><polygon points="0,0 9,0 4.5,5" fill="#000"/></svg></div>
<div class="b" style="left:1003px;top:267px;width:69px;height:19px;background:#b4b4b4;border:1px solid #000;line-height:17px;"><i class="hl"></i><span class="lbl sx" style="left:5px;color:#000;font-size:12px">Edit</span><svg class="a" style="right:5px;top:6.0px" width="9" height="5"><polygon points="0,0 9,0 4.5,5" fill="#000"/></svg></div>
<div style="left:688px;top:289px;width:365px;height:82px;background:#767676;border:1px solid #000"></div>
<div style="left:689px;top:290px;width:363px;height:16px;background:#4c4c4c"></div>
<div style="left:740px;top:290px;width:1px;height:16px;background:#2e2e2e"></div>
<div class="t sx" style="left:692px;top:293px;color:#d4d4d4;font-size:12px">On</div>
<div class="t sx" style="left:743px;top:293px;color:#d4d4d4;font-size:12px">Name</div>
<div style="left:1055px;top:289px;width:18px;height:82px;background:linear-gradient(to right,#9a9a9a,#c0c0c0 30%,#b4b4b4 70%,#8c8c8c);border:1px solid #6a6a6a;border-top-color:#d0d0d0;border-left-color:#d0d0d0"></div>
<div style="left:1057px;top:324px;width:14px;height:1px;background:#e6e6e6"></div>
<div style="left:1057px;top:325px;width:14px;height:1px;background:#808080"></div>
<div style="left:1057px;top:327px;width:14px;height:1px;background:#e6e6e6"></div>
<div style="left:1057px;top:328px;width:14px;height:1px;background:#808080"></div>
<div style="left:1057px;top:330px;width:14px;height:1px;background:#e6e6e6"></div>
<div style="left:1057px;top:331px;width:14px;height:1px;background:#808080"></div>
<div style="left:1057px;top:333px;width:14px;height:1px;background:#e6e6e6"></div>
<div style="left:1057px;top:334px;width:14px;height:1px;background:#808080"></div>
<div class="b" style="left:688px;top:384px;width:310px;height:19px;background:#b4b4b4;border:1px solid #000;line-height:17px;"><i class="hl"></i><span class="lbl sx" style="left:4px;color:#000;font-size:12px">Add Image Filter</span><svg class="a" style="right:5px;top:6.0px" width="9" height="5"><polygon points="0,0 9,0 4.5,5" fill="#000"/></svg></div>
<div class="b" style="left:1003px;top:384px;width:69px;height:19px;background:#b4b4b4;border:1px solid #000;line-height:17px;"><i class="hl"></i><span class="lbl sx" style="left:5px;color:#000;font-size:12px">Edit</span><svg class="a" style="right:5px;top:6.0px" width="9" height="5"><polygon points="0,0 9,0 4.5,5" fill="#000"/></svg></div>
<div style="left:688px;top:406px;width:365px;height:82px;background:#767676;border:1px solid #000"></div>
<div style="left:689px;top:407px;width:363px;height:16px;background:#4c4c4c"></div>
<div style="left:740px;top:407px;width:1px;height:16px;background:#2e2e2e"></div>
<div class="t sx" style="left:692px;top:410px;color:#d4d4d4;font-size:12px">On</div>
<div class="t sx" style="left:743px;top:410px;color:#d4d4d4;font-size:12px">Name</div>
<div style="left:1055px;top:406px;width:18px;height:82px;background:linear-gradient(to right,#9a9a9a,#c0c0c0 30%,#b4b4b4 70%,#8c8c8c);border:1px solid #6a6a6a;border-top-color:#d0d0d0;border-left-color:#d0d0d0"></div>
<div style="left:1057px;top:441px;width:14px;height:1px;background:#e6e6e6"></div>
<div style="left:1057px;top:442px;width:14px;height:1px;background:#808080"></div>
<div style="left:1057px;top:444px;width:14px;height:1px;background:#e6e6e6"></div>
<div style="left:1057px;top:445px;width:14px;height:1px;background:#808080"></div>
<div style="left:1057px;top:447px;width:14px;height:1px;background:#e6e6e6"></div>
<div style="left:1057px;top:448px;width:14px;height:1px;background:#808080"></div>
<div style="left:1057px;top:450px;width:14px;height:1px;background:#e6e6e6"></div>
<div style="left:1057px;top:451px;width:14px;height:1px;background:#808080"></div>
<div style="left:681px;top:377px;width:398px;height:1px;background:#000"></div>
<div style="left:681px;top:378px;width:398px;height:1px;background:#b4b4b4"></div>
<div style="left:689px;top:423px;width:363px;height:16px;background:#a2a2a2"></div>
<svg style="left:690px;top:426px" width="12" height="10"><path d="M1,5 L4,8.5 L11,1" fill="none" stroke="#000" stroke-width="1.8"/></svg>
<div class="t sx" style="left:743px;top:425px;font-size:12px">exrTrader: V:\BSG_Tutorial\BSGTUT_KeyPass_R01\BSGTU&nbsp;&nbsp;...</div>
<div style="left:1153px;top:160px;width:345px;height:532px;background:#8f8f8f;border-top:2px solid #f2f2ee;border-left:2px solid #f2f2ee;border-right:2px solid #e8e8e4;border-bottom:2px solid #e8e8e4;box-shadow:1px 1px 0 #505050"></div>
<div style="left:1155px;top:162px;width:341px;height:19px;background:linear-gradient(to right,#7e7e7e,#c2c2c2)"></div>
<svg style="left:1158px;top:164px" width="16" height="16" viewBox="0 0 16 16">
<defs><clipPath id="ic1158_164"><rect x="0" y="0" width="16" height="16"/></clipPath></defs>
<g clip-path="url(#ic1158_164)">
<rect x="0" y="0" width="16" height="16" fill="#cc1010"/>
<g fill="#f6e6c4"><polygon points="11.5,1 10.2,5.5 13,5.2"/><polygon points="6,3.8 8,8.2 9.8,6.6"/><polygon points="1.8,8.5 5.4,10.8 6.2,8.8"/><polygon points="0.8,14.5 4.8,14.2 4.6,12.2"/></g>
<circle cx="13.6" cy="13.6" r="7.2" fill="none" stroke="#f6eccc" stroke-width="2.8"/>
<circle cx="13.6" cy="13.6" r="3.4" fill="none" stroke="#f6eccc" stroke-width="1.8"/>
</g></svg>
<div class="t" style="left:1176px;top:165px;font-weight:bold;font-size:11.6px;color:#dcd8d0">exrTrader - OpenEXR Layered Export</div>
<div style="left:1444px;top:165px;width:16px;height:14px;background:#d4d0c8;border-top:1px solid #fff;border-left:1px solid #fff;border-right:1px solid #404040;border-bottom:1px solid #404040;box-shadow:inset -1px -1px 0 #808080"><div style="left:4px;top:9px;width:6px;height:2px;background:#000"></div></div>
<div style="left:1460px;top:165px;width:16px;height:14px;background:#d4d0c8;border-top:1px solid #fff;border-left:1px solid #fff;border-right:1px solid #404040;border-bottom:1px solid #404040;box-shadow:inset -1px -1px 0 #808080"><div style="left:3px;top:2px;width:9px;height:8px;border:1px solid #777;border-top-width:2px;box-shadow:1px 1px 0 #fff"></div></div>
<div style="left:1477px;top:165px;width:16px;height:14px;background:#d4d0c8;border-top:1px solid #fff;border-left:1px solid #fff;border-right:1px solid #404040;border-bottom:1px solid #404040;box-shadow:inset -1px -1px 0 #808080"><svg style="left:4px;top:3px" width="9" height="8"><path d="M1,0.5 L8,7.5 M8,0.5 L1,7.5" stroke="#000" stroke-width="1.8"/></svg></div>
<div style="left:1155px;top:181px;width:340px;height:1px;background:#c8c8c8"></div>
<div class="t sxr" style="right:364px;top:193px;color:#000;font-size:12px">Render Mode (Layout only)</div>
<div class="b" style="left:1325px;top:190px;width:163px;height:19px;background:#b8b8b8;border:1px solid #000;line-height:17px;"><i class="hl"></i><span class="lbl sx" style="left:5px;color:#000;font-size:12px">VIPER</span><svg class="a" style="right:5px;top:6.0px" width="9" height="5"><polygon points="0,0 9,0 4.5,5" fill="#000"/></svg></div>
<div class="b" style="left:1325px;top:212px;width:163px;height:19px;background:#b8b8b8;border:1px solid #000;line-height:17px;"><i class="hl"></i><span class="lbl sx" style="left:5px;color:#000;font-size:12px">Presets</span></div>
<div class="b" style="left:1164px;top:234px;width:107px;height:19px;background:#a8bdbc;border:1px solid #000;line-height:17px;"><i class="hl"></i><span class="lbl sx" style="left:5px;color:#d4e2e2;font-size:12px">Output File</span></div>
<div style="left:1274px;top:234px;width:214px;height:19px;background:#4e4e4e;border:1px solid #000;line-height:17px;color:#9aa0a8;font-size:12px;white-space:nowrap;overflow:hidden;"><span class="sx" style="left:6px;top:1px">V:\BSG_Tutorial\</span></div>
<div style="left:1164px;top:256px;width:120px;height:19px;background:#a5b4c7;border:1px solid #000;line-height:17px;overflow:hidden"><div style="left:0;top:0;width:21px;height:17px;background:#ffffff;border-right:1px solid #000"></div><svg style="left:5px;top:3px" width="12" height="10"><path d="M1,5 L4,8.5 L11,1" fill="none" stroke="#000" stroke-width="2"/></svg><span class="lbl sx" style="left:25px;color:#000">Use Render Path</span></div>
<div class="t sxr" style="right:364px;top:259px;color:#000;font-size:12px">Format</div>
<div class="b" style="left:1325px;top:256px;width:163px;height:19px;background:#b8b8b8;border:1px solid #000;line-height:17px;"><i class="hl"></i><span class="lbl sx" style="left:5px;color:#000;font-size:12px">Name</span><svg class="a" style="right:5px;top:6.0px" width="9" height="5"><polygon points="0,0 9,0 4.5,5" fill="#000"/></svg></div>
<div class="t sxr" style="right:364px;top:281px;color:#000;font-size:12px">Single Image File Naming</div>
<div class="b" style="left:1325px;top:278px;width:163px;height:19px;background:#b8b8b8;border:1px solid #000;line-height:17px;"><i class="hl"></i><span class="lbl sx" style="left:5px;color:#000;font-size:12px">Output</span><svg class="a" style="right:5px;top:6.0px" width="9" height="5"><polygon points="0,0 9,0 4.5,5" fill="#000"/></svg></div>
<div class="t sxr" style="right:364px;top:303px;color:#000;font-size:12px">Compression</div>
<div class="b" style="left:1325px;top:300px;width:163px;height:19px;background:#b8b8b8;border:1px solid #000;line-height:17px;"><i class="hl"></i><span class="lbl sx" style="left:5px;color:#000;font-size:12px">ZIP (</span><svg class="a" style="right:5px;top:6.0px" width="9" height="5"><polygon points="0,0 9,0 4.5,5" fill="#000"/></svg></div>
<svg style="left:1155px;top:321px" width="300" height="20"><polygon points="62,19 62,2 117,2 132,19" fill="#acacac"/><line x1="62" y1="1.5" x2="118" y2="1.5" stroke="#6e6e6e" stroke-width="1"/><line x1="62.5" y1="2" x2="62.5" y2="19" stroke="#d8d8d8" stroke-width="1"/><line x1="62" y1="2.5" x2="117" y2="2.5" stroke="#d8d8d8" stroke-width="1"/><line x1="117.5" y1="2" x2="132.5" y2="19" stroke="#6a6a6a" stroke-width="2"/><line x1="116" y1="3" x2="130.5" y2="19" stroke="#c8c8c8" stroke-width="1"/><text transform="translate(70,0) scale(.88,1)" x="0" y="14.94" font-family="Liberation Sans" font-size="12" fill="#000">Metadata</text><polygon points="9,19 9,2 52,2 67,19" fill="#ffffff"/><text transform="translate(18,0) scale(.88,1)" x="0" y="14.94" font-family="Liberation Sans" font-size="12" fill="#000">Buffers</text></svg>
<div style="left:1155px;top:341px;width:340px;height:1px;background:#c8c8c8"></div>
<div class="t sxr" style="right:364px;top:351px;color:#000;font-size:12px">Buffer</div>
<div class="b" style="left:1325px;top:348px;width:163px;height:19px;background:#c0c0c0;border:1px solid #000;line-height:17px;"><i class="hl"></i><span class="lbl sx" style="left:5px;color:#000;font-size:12px">&nbsp;&nbsp;&nbsp;Tr</span><svg class="a" style="right:5px;top:6.0px" width="9" height="5"><polygon points="0,0 9,0 4.5,5" fill="#000"/></svg></div>
<div class="t sxr" style="right:364px;top:373px;color:#000;font-size:12px">Description</div>
<div style="left:1325px;top:370px;width:163px;height:19px;background:#4e4e4e;border:1px solid #000;line-height:17px;color:#f0f0f0;font-size:12px;white-space:nowrap;overflow:hidden;"><span class="sx" style="left:6px;top:1px">Tran</span></div>
<div class="b" style="left:1325px;top:392px;width:163px;height:19px;background:#b8b8b8;border:1px solid #000;line-height:17px;"><i class="hl"></i><span class="lbl sx" style="left:5px;color:#000;font-size:12px">Quic</span></div>
<div style="left:1155px;top:417px;width:340px;height:1px;background:#000"></div>
<div style="left:1155px;top:418px;width:340px;height:1px;background:#b4b4b4"></div>
<div style="left:1164px;top:424px;width:77px;height:19px;background:#a5b4c7;border:1px solid #000;line-height:17px;overflow:hidden"><div style="left:0;top:0;width:21px;height:17px;background:#a5b4c7;border-right:1px solid #000"></div><span class="lbl sx" style="left:25px;color:#000">Enabled</span></div>
<div class="t sxr" style="right:364px;top:427px;color:#626262;font-size:12px">Base Name</div>
<div style="left:1325px;top:424px;width:163px;height:19px;background:#4e4e4e;border:1px solid #000;line-height:17px;color:#a0a4aa;font-size:12px;white-space:nowrap;overflow:hidden;"><span class="sx" style="left:6px;top:1px">Tran</span></div>
<div style="left:1325px;top:446px;width:163px;height:19px;background:#a5b4c7;border:1px solid #000;line-height:17px;overflow:hidden"><div style="left:0;top:0;width:21px;height:17px;background:#a5b4c7;border-right:1px solid #000"></div><span class="lbl sx" style="left:25px;color:#5a6070">S</span></div>
<div class="t sxr" style="right:364px;top:471px;color:#626262;font-size:12px">Pixel Type</div>
<div class="b" style="left:1325px;top:468px;width:163px;height:19px;background:#ababab;border:1px solid #000;line-height:17px;"><i class="hl"></i><span class="lbl sx" style="left:5px;color:#d0d0d0;font-size:12px">32bit Float</span></div>
<div style="left:1164px;top:490px;width:65px;height:19px;background:#a5b4c7;border:1px solid #000;line-height:17px;overflow:hidden"><div style="left:0;top:0;width:21px;height:17px;background:#a5b4c7;border-right:1px solid #000"></div><span class="lbl sx" style="left:25px;color:#5a6070">Invert</span></div>
<div class="t sxr" style="right:364px;top:493px;color:#626262;font-size:12px">Minimum</div>
<div style="left:1325px;top:490px;width:121px;height:19px;background:#4e4e4e;border:1px solid #000;line-height:17px;color:#a0a4aa;font-size:12px;white-space:nowrap;overflow:hidden;"><span class="sx" style="left:6px;top:1px">0.0</span></div>
<div style="left:1448px;top:490px;width:19px;height:19px;background:#b0b0b0;border:1px solid #000;box-shadow:inset 1px 1px 0 #d8d8d8"><svg style="left:3px;top:3px" width="11" height="10"><polygon points="0,5 5,0 5,10" fill="#8e8e8e"/><polygon points="6,0 11,5 6,10" fill="#969696"/><path d="M5.5,0 V10 M7,9 L10.5,5.5" stroke="#f0f0f0" stroke-width="1"/></svg></div>
<div style="left:1469px;top:490px;width:19px;height:19px;background:#a8bdbc;border:1px solid #000;text-align:center;line-height:17px;color:#e0ecec;font-size:12px">E</div>
<div class="t sxr" style="right:364px;top:515px;color:#626262;font-size:12px">Maximum</div>
<div style="left:1325px;top:512px;width:121px;height:19px;background:#4e4e4e;border:1px solid #000;line-height:17px;color:#a0a4aa;font-size:12px;white-space:nowrap;overflow:hidden;"><span class="sx" style="left:6px;top:1px">1.0</span></div>
<div style="left:1448px;top:512px;width:19px;height:19px;background:#b0b0b0;border:1px solid #000;box-shadow:inset 1px 1px 0 #d8d8d8"><svg style="left:3px;top:3px" width="11" height="10"><polygon points="0,5 5,0 5,10" fill="#8e8e8e"/><polygon points="6,0 11,5 6,10" fill="#969696"/><path d="M5.5,0 V10 M7,9 L10.5,5.5" stroke="#f0f0f0" stroke-width="1"/></svg></div>
<div style="left:1469px;top:512px;width:19px;height:19px;background:#a8bdbc;border:1px solid #000;text-align:center;line-height:17px;color:#e0ecec;font-size:12px">E</div>
<div class="t sxr" style="right:364px;top:537px;color:#626262;font-size:12px">Offset</div>
<div style="left:1325px;top:534px;width:121px;height:19px;background:#4e4e4e;border:1px solid #000;line-height:17px;color:#a0a4aa;font-size:12px;white-space:nowrap;overflow:hidden;"><span class="sx" style="left:6px;top:1px">0.0</span></div>
<div style="left:1448px;top:534px;width:19px;height:19px;background:#b0b0b0;border:1px solid #000;box-shadow:inset 1px 1px 0 #d8d8d8"><svg style="left:3px;top:3px" width="11" height="10"><polygon points="0,5 5,0 5,10" fill="#8e8e8e"/><polygon points="6,0 11,5 6,10" fill="#969696"/><path d="M5.5,0 V10 M7,9 L10.5,5.5" stroke="#f0f0f0" stroke-width="1"/></svg></div>
<div style="left:1469px;top:534px;width:19px;height:19px;background:#a8bdbc;border:1px solid #000;text-align:center;line-height:17px;color:#e0ecec;font-size:12px">E</div>
<div class="t sxr" style="right:364px;top:559px;color:#626262;font-size:12px">Scale</div>
<div style="left:1325px;top:556px;width:121px;height:19px;background:#4e4e4e;border:1px solid #000;line-height:17px;color:#a0a4aa;font-size:12px;white-space:nowrap;overflow:hidden;"><span class="sx" style="left:6px;top:1px">1.0</span></div>
<div style="left:1448px;top:556px;width:19px;height:19px;background:#b0b0b0;border:1px solid #000;box-shadow:inset 1px 1px 0 #d8d8d8"><svg style="left:3px;top:3px" width="11" height="10"><polygon points="0,5 5,0 5,10" fill="#8e8e8e"/><polygon points="6,0 11,5 6,10" fill="#969696"/><path d="M5.5,0 V10 M7,9 L10.5,5.5" stroke="#f0f0f0" stroke-width="1"/></svg></div>
<div style="left:1469px;top:556px;width:19px;height:19px;background:#a8bdbc;border:1px solid #000;text-align:center;line-height:17px;color:#e0ecec;font-size:12px">E</div>
<div class="t sxr" style="right:364px;top:581px;color:#626262;font-size:12px">Channel</div>
<div class="b" style="left:1325px;top:578px;width:163px;height:19px;background:#ababab;border:1px solid #000;line-height:17px;"><i class="hl"></i><span class="lbl sx" style="left:5px;color:#d0d0d0;font-size:12px">Shadow</span></div>
<svg style="left:1470px;top:584px" width="10" height="6"><polygon points="0,0 10,0 5,6" fill="#d8d8d8"/></svg>
<div class="t sxr" style="right:364px;top:603px;color:#626262;font-size:12px">Channel Name</div>
<div style="left:1325px;top:600px;width:121px;height:19px;background:#4e4e4e;border:1px solid #000;line-height:17px;color:#a0a4aa;font-size:12px;white-space:nowrap;overflow:hidden;"><span class="sx" style="left:6px;top:1px">R</span></div>
<div style="left:1155px;top:626px;width:340px;height:1px;background:#000"></div>
<div style="left:1155px;top:627px;width:340px;height:1px;background:#b4b4b4"></div>
<div class="b" style="left:1164px;top:632px;width:156px;height:19px;background:#a5b4c7;border:1px solid #000;line-height:17px;"><i class="hl"></i><span class="lbl sx" style="left:5px;color:#000;font-size:12px">About exrTrader...</span></div>
<div class="b" style="left:1325px;top:632px;width:163px;height:19px;background:#a5b4c7;border:1px solid #000;line-height:17px;"><i class="hl"></i><span class="lbl sx" style="left:5px;color:#000;font-size:12px">Review Settings...</span></div>
<div style="left:1354px;top:173px;width:134px;height:305px;background:#a8a8a8;border:1px solid #000"></div>
<div style="left:1488px;top:190px;width:1px;height:288px;background:#000"></div>
<div style="left:1362px;top:183px;width:118px;height:15px;background:#000"></div>
<div class="t sx" style="left:1387px;top:185px;color:#e8e8e8;font-size:12px">Final Render</div>
<svg style="left:1374px;top:184px" width="12" height="10"><path d="M1,5 L4,8.5 L11,1" fill="none" stroke="#e8e8e8" stroke-width="2"/></svg>
<div class="t sx" style="left:1387px;top:200px;color:#000;font-size:12px">Alpha</div>
<svg style="left:1374px;top:199px" width="12" height="10"><path d="M1,5 L4,8.5 L11,1" fill="none" stroke="#000" stroke-width="2"/></svg>
<div class="t sx" style="left:1387px;top:215px;color:#000;font-size:12px">Raw Colour</div>
<div class="t sx" style="left:1387px;top:230px;color:#000;font-size:12px">Reflection Colour</div>
<svg style="left:1374px;top:229px" width="12" height="10"><path d="M1,5 L4,8.5 L11,1" fill="none" stroke="#000" stroke-width="2"/></svg>
<div class="t sx" style="left:1387px;top:245px;color:#000;font-size:12px">Diffuse Colour</div>
<svg style="left:1374px;top:244px" width="12" height="10"><path d="M1,5 L4,8.5 L11,1" fill="none" stroke="#000" stroke-width="2"/></svg>
<div class="t sx" style="left:1387px;top:260px;color:#000;font-size:12px">Specular Colour</div>
<svg style="left:1374px;top:259px" width="12" height="10"><path d="M1,5 L4,8.5 L11,1" fill="none" stroke="#000" stroke-width="2"/></svg>
<div class="t sx" style="left:1387px;top:275px;color:#000;font-size:12px">Special</div>
<div class="t sx" style="left:1387px;top:290px;color:#000;font-size:12px">Luminosity</div>
<div class="t sx" style="left:1387px;top:305px;color:#000;font-size:12px">Diffuse</div>
<div class="t sx" style="left:1387px;top:320px;color:#000;font-size:12px">Specularity</div>
<div class="t sx" style="left:1387px;top:335px;color:#000;font-size:12px">Reflectivity</div>
<div class="t sx" style="left:1387px;top:350px;color:#000;font-size:12px">Transparency</div>
<div class="t sx" style="left:1387px;top:365px;color:#000;font-size:12px">Shading</div>
<div class="t sx" style="left:1387px;top:380px;color:#000;font-size:12px">Shadow</div>
<div class="t sx" style="left:1387px;top:395px;color:#000;font-size:12px">Geometry</div>
<div class="t sx" style="left:1387px;top:410px;color:#000;font-size:12px">Depth</div>
<div class="t sx" style="left:1387px;top:425px;color:#000;font-size:12px">DiffShade</div>
<div class="t sx" style="left:1387px;top:440px;color:#000;font-size:12px">SpecShade</div>
<div class="t sx" style="left:1387px;top:455px;color:#000;font-size:12px">Motion</div>
<div class="t" style="left:521px;top:638px;font-size:26.5px;letter-spacing:0;color:#f4f4f4;text-shadow:0.5px 0 0 #f4f4f4;font-family:'Liberation Sans',sans-serif">Fill Pass buffer selection options shown.</div>
<svg style="left:0;top:0" width="1683" height="1047"><path d="M996,655 L1015,647 L1052,630 L1078,610 L1091,577 L1098,528 L1098,474 L1101,437 L1109,384 L1117,359 L1138,341 L1163,326 L1195,316 L1220,308 L1253,293 L1286,277 L1315,258 L1323,252 L1319,281 L1317,302 L1283,263 L1322,252 L1270,272" fill="none" stroke="#fff" stroke-width="1.2" stroke-linejoin="round"/></svg></body></html>
